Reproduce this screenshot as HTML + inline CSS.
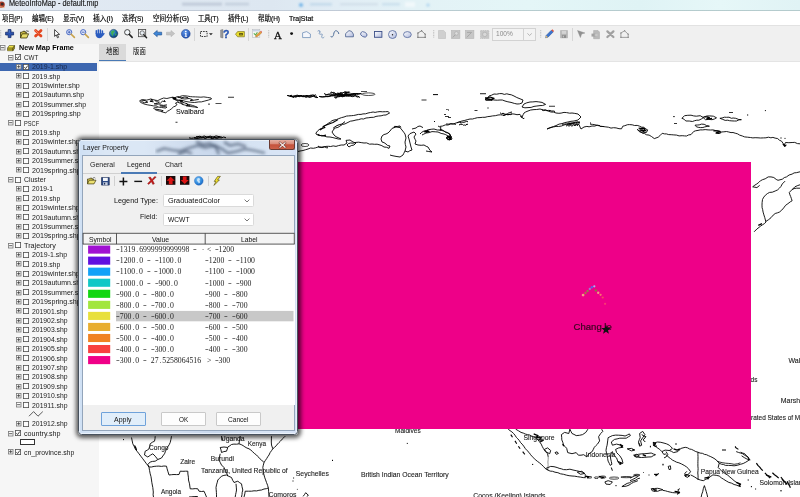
<!DOCTYPE html>
<html><head><meta charset="utf-8"><title>MeteoInfoMap - default.mip</title>
<style>
html,body{margin:0;padding:0;background:#fff;}
#app{position:relative;width:800px;height:497px;overflow:hidden;background:#fff;font-family:"Liberation Sans","Noto Sans CJK SC",sans-serif;}
.t{position:absolute;white-space:pre;transform-origin:0 50%;display:block;}
.b{position:absolute;box-sizing:border-box;}
svg{position:absolute;overflow:visible;}
.c{display:inline-block;width:3.87px;text-align:center;font-style:normal;}
.h{transform:scaleX(1.45);}

</style></head><body>
<div id="app">
<div class="b" style='left:99px;top:61px;width:701px;height:436px;background:#fff;'></div>
<svg width='800' height='497' viewBox='0 0 800 497' style='left:0;top:0;will-change:transform'><path d='M139.8 100.6 L142.4 99.6 L146.7 100.1 L150.9 99.0 L154.7 100.1 L157.8 100.6 L161.0 99.0 L163.7 98.0 L166.9 98.5 L170.1 97.7 L172.7 97.2 L174.9 97.7 L173.8 99.0 L175.9 100.1 L178.6 100.6 L177.5 102.2 L175.4 103.3 L177.0 104.3 L175.9 105.9 L173.3 107.0 L171.7 108.6 L169.5 110.2 L167.4 111.3 L165.8 112.8 L163.2 112.3 L161.0 111.3 L157.8 110.7 L155.2 109.7 L153.6 108.1 L155.7 107.5 L157.8 107.0 L156.3 105.9 L153.6 105.9 L150.9 105.4 L147.8 104.9 L145.1 104.3 L142.4 103.3 L140.3 102.2Z' fill='none' stroke='#000' stroke-width='0.85' stroke-linejoin='round'/><path d='M141.4 100.1 L145.1 100.6 L147.8 102.2 L144.6 102.8 L141.4 101.5' fill='none' stroke='#000' stroke-width='0.9' stroke-linejoin='round'/><path d='M150.9 99.0 L152.5 100.6 L149.9 101.2 L153.6 101.9' fill='none' stroke='#000' stroke-width='1' stroke-linejoin='round'/><path d='M154.7 100.1 L156.3 101.7 L159.4 102.2 L157.8 103.3 L154.1 103.8 L157.3 104.3 L160.5 103.6' fill='none' stroke='#000' stroke-width='0.85' stroke-linejoin='round'/><path d='M157.8 107.0 L161.6 107.5 L165.8 108.1 L166.9 107.0 L163.7 106.5 L160.0 105.9' fill='none' stroke='#000' stroke-width='0.85' stroke-linejoin='round'/><path d='M159.4 104.9 L163.7 105.4 L166.9 104.9' fill='none' stroke='#000' stroke-width='1' stroke-linejoin='round'/><path d='M160.5 102.8 L162.6 101.2 L165.3 101.7 L164.2 100.1' fill='none' stroke='#000' stroke-width='0.9' stroke-linejoin='round'/><path d='M155.2 109.1 L159.4 109.7 L163.2 110.7 L161.6 111.8' fill='none' stroke='#000' stroke-width='0.9' stroke-linejoin='round'/><path d='M174.9 97.7 L177.1 96.7 L179.6 96.6 L182.4 95.7 L184.9 95.8 L187.6 96.1 L190.3 96.6 L192.6 96.8 L195.6 96.9 L197.9 97.0 L200.9 97.2 L203.8 96.9 L207.3 97.4 L211.0 98.0 L211.5 99.0 L208.3 100.1 L204.1 101.2 L201.4 101.9 L198.8 101.9 L194.5 102.5 L190.3 102.2 L186.0 101.5 L182.8 100.6 L179.6 100.4 L177.5 99.8 L175.9 100.1Z' fill='none' stroke='#000' stroke-width='0.85' stroke-linejoin='round'/><path d='M180.7 98.5 L184.9 99.0 L189.2 98.5 L192.4 99.6 L190.3 100.6 L194.5 100.1 L198.8 99.4' fill='none' stroke='#000' stroke-width='0.9' stroke-linejoin='round'/><path d='M172.2 97.7 L175.9 98.3 L173.3 98.9 L176.4 99.1' fill='none' stroke='#000' stroke-width='1.2' stroke-linejoin='round'/><path d='M179.1 100.1 L182.3 100.6 L180.2 101.3 L182.8 101.5' fill='none' stroke='#000' stroke-width='1.1' stroke-linejoin='round'/><path d='M177.5 97.4 L181.8 97.7 L184.9 97.0 L188.1 97.7' fill='none' stroke='#000' stroke-width='0.9' stroke-linejoin='round'/><path d='M180.7 101.7 L184.4 102.8 L188.1 104.3 L192.4 105.4 L195.6 106.5 L197.7 107.5 L194.5 107.0 L190.3 106.5 L187.1 105.7 L184.4 104.9 L182.3 103.6 L180.7 102.5Z' fill='none' stroke='#000' stroke-width='0.85' stroke-linejoin='round'/><path d='M186.0 103.3 L188.1 104.9 L186.5 105.9 L190.3 105.7' fill='none' stroke='#000' stroke-width='1' stroke-linejoin='round'/><path d='M177.5 102.2 L180.7 103.3 L183.4 104.9' fill='none' stroke='#000' stroke-width='0.9' stroke-linejoin='round'/><rect x='208.0' y='103.7' width='2' height='0.8' fill='#000'/><rect x='215.5' y='103.1' width='6' height='0.7' fill='#000'/><rect x='175.5' y='121.8' width='2' height='0.8' fill='#000'/><rect x='228.0' y='96.8' width='6' height='0.8' fill='#000'/><path d='M189.0 137.8 L191.3 138.3 L193.6 138.0 L195.9 138.4 L198.2 138.4 L200.6 137.3 L202.9 137.2 L205.2 138.6 L207.5 137.5 L209.8 137.4 L212.1 138.8 L214.4 137.8 L216.8 138.4 L219.1 137.7 L221.4 137.9 L223.7 137.0 L226.0 137.8' fill='none' stroke='#000' stroke-width='1'/><path d='M194.0 137.6 L196.3 137.7 L198.7 137.8 L201.0 138.0 L203.3 137.7 L205.7 137.9 L208.0 136.6 L210.3 137.2 L212.7 137.9 L215.0 137.5 L217.3 137.8 L219.7 136.7 L222.0 137.2' fill='none' stroke='#000' stroke-width='1'/><path d='M196.0 136.7 L198.0 136.6 L200.0 136.2 L202.0 137.3 L204.0 135.9 L206.0 136.7 L208.0 137.3 L210.0 136.0 L212.0 136.8 L214.0 136.8 L216.0 135.9 L218.0 136.4 L220.0 136.9' fill='none' stroke='#000' stroke-width='1'/><path d='M287.0 95.5 L289.2 95.8 L291.4 96.6 L293.6 95.9 L295.9 96.1 L298.1 96.3 L300.3 95.7 L302.5 96.4 L304.7 96.7 L306.9 97.2 L309.1 96.0 L311.4 96.5 L313.6 96.2 L315.8 97.6 L318.0 97.5' fill='none' stroke='#000' stroke-width='1'/><path d='M288.0 95.5 L289.6 96.2 L291.2 95.0 L292.8 97.0 L294.4 96.8 L296.1 97.2 L297.7 95.8 L299.3 95.7 L300.9 95.5 L302.5 95.8 L304.1 95.6 L305.7 97.0 L307.3 96.4 L308.9 97.3 L310.6 97.3 L312.2 96.5 L313.8 96.2 L315.4 96.6 L317.0 96.1' fill='none' stroke='#000' stroke-width='1'/><path d='M290.0 96.4 L291.9 96.6 L293.7 96.6 L295.6 95.5 L297.4 95.2 L299.3 95.8 L301.1 95.6 L303.0 96.5 L304.9 96.2 L306.7 95.9 L308.6 95.8 L310.4 95.9 L312.3 94.9 L314.1 95.4 L316.0 94.8' fill='none' stroke='#000' stroke-width='1'/><path d='M291.0 95.8 L292.3 96.8 L293.7 97.5 L295.0 96.1 L296.3 96.5 L297.7 96.0 L299.0 96.7 L300.3 96.5 L301.7 96.2 L303.0 96.9 L304.3 96.3 L305.7 95.5 L307.0 95.5 L308.3 95.9 L309.7 95.9 L311.0 94.9 L312.3 96.0 L313.7 95.2 L315.0 95.7' fill='none' stroke='#000' stroke-width='1'/><path d='M319.0 96.4 L322.1 96.9 L325.1 96.6 L328.2 96.7 L331.3 95.3 L334.4 95.1 L337.4 94.7 L340.5 94.6 L343.6 95.3 L346.6 93.9 L349.7 94.4 L352.8 93.6 L355.9 93.5 L358.9 93.5 L362.0 94.0' fill='none' stroke='#000' stroke-width='1'/><path d='M320.0 96.7 L322.3 96.9 L324.6 96.8 L326.8 96.4 L329.1 96.4 L331.4 96.0 L333.7 95.8 L335.9 95.0 L338.2 94.6 L340.5 94.7 L342.8 95.5 L345.1 93.8 L347.3 94.2 L349.6 94.1 L351.9 94.2 L354.2 93.7 L356.4 94.3 L358.7 94.3 L361.0 93.3' fill='none' stroke='#000' stroke-width='1'/><path d='M324.0 93.5 L326.6 94.8 L329.1 94.8 L331.7 95.5 L334.3 94.5 L336.9 94.7 L339.4 95.7 L342.0 95.8 L344.6 95.3 L347.1 96.2 L349.7 95.9 L352.3 96.7 L354.9 95.7 L357.4 96.1 L360.0 97.5' fill='none' stroke='#000' stroke-width='1'/><path d='M325.0 95.2 L326.9 94.6 L328.8 94.0 L330.7 94.1 L332.6 94.6 L334.4 95.8 L336.3 96.1 L338.2 95.0 L340.1 95.3 L342.0 95.5 L343.9 96.5 L345.8 95.7 L347.7 95.5 L349.6 96.0 L351.4 95.1 L353.3 96.3 L355.2 95.6 L357.1 97.1 L359.0 96.5' fill='none' stroke='#000' stroke-width='1'/><path d='M330.0 93.4 L331.6 91.9 L333.1 93.4 L334.7 92.6 L336.3 94.3 L337.9 92.7 L339.4 94.5 L341.0 94.3 L342.6 94.8 L344.1 95.3 L345.7 94.1 L347.3 94.5 L348.9 95.4 L350.4 94.8 L352.0 95.0' fill='none' stroke='#000' stroke-width='1'/><path d='M331.0 92.8 L332.1 92.9 L333.2 92.2 L334.3 93.8 L335.4 93.8 L336.6 93.9 L337.7 93.6 L338.8 94.1 L339.9 94.7 L341.0 94.4 L342.1 93.9 L343.2 95.1 L344.3 94.1 L345.4 93.7 L346.6 94.2 L347.7 94.8 L348.8 95.7 L349.9 94.8 L351.0 95.5' fill='none' stroke='#000' stroke-width='1'/><path d='M334.0 97.2 L335.6 97.1 L337.1 96.8 L338.7 96.6 L340.3 96.3 L341.9 96.5 L343.4 95.6 L345.0 96.0 L346.6 94.7 L348.1 95.0 L349.7 94.8 L351.3 94.2 L352.9 95.1 L354.4 94.1 L356.0 94.7' fill='none' stroke='#000' stroke-width='1'/><path d='M335.0 97.4 L336.1 98.4 L337.2 96.7 L338.3 96.7 L339.4 96.7 L340.6 96.1 L341.7 96.1 L342.8 96.9 L343.9 96.0 L345.0 95.0 L346.1 96.3 L347.2 94.9 L348.3 95.8 L349.4 94.1 L350.6 95.1 L351.7 94.8 L352.8 94.6 L353.9 95.2 L355.0 94.5' fill='none' stroke='#000' stroke-width='1'/><path d='M338.0 93.2 L338.9 93.7 L339.7 93.9 L340.6 92.6 L341.4 93.4 L342.3 93.2 L343.1 93.1 L344.0 92.0 L344.9 91.8 L345.7 92.3 L346.6 92.9 L347.4 92.0 L348.3 92.3 L349.1 91.9 L350.0 92.8' fill='none' stroke='#000' stroke-width='1'/><path d='M339.0 94.1 L339.6 93.1 L340.1 92.8 L340.7 93.9 L341.2 92.4 L341.8 93.0 L342.3 93.1 L342.9 93.1 L343.4 92.1 L344.0 93.0 L344.6 92.7 L345.1 93.3 L345.7 91.6 L346.2 93.3 L346.8 91.7 L347.3 92.9 L347.9 92.2 L348.4 92.8 L349.0 91.4' fill='none' stroke='#000' stroke-width='1'/><ellipse cx='368.5' cy='94.2' rx='6.5' ry='1.3' fill='#fff' stroke='#000' stroke-width='0.7'/><rect x='361.0' y='91.1' width='6' height='0.7' fill='#000'/><rect x='433.0' y='94.1' width='5' height='1' fill='#000'/><rect x='421.5' y='99.6' width='5' height='0.8' fill='#000'/><path d='M316.0 133.0 L317.8 130.7 L320.0 129.0 L322.1 128.2 L324.1 126.2 L326.0 125.0 L328.3 123.3 L330.2 122.3 L331.8 120.8 L334.0 120.0 L336.4 119.6 L338.8 118.6 L341.6 117.6 L344.0 117.0 L346.4 116.1 L348.5 115.9 L351.3 115.7 L353.5 115.5 L356.0 115.0 L358.4 114.4 L361.0 114.4 L363.0 113.9 L365.6 113.8 L368.0 113.0 L370.6 112.5 L373.1 112.0 L375.1 112.4 L377.4 111.9 L380.0 111.6 L382.4 111.8 L385.5 111.7 L388.0 111.6 L389.6 113.0 L386.0 115.0 L383.7 115.1 L381.1 115.8 L378.6 116.0 L376.0 116.4 L373.7 117.3 L371.0 117.4 L368.2 117.8 L366.0 118.0 L363.6 119.0 L361.2 118.8 L358.4 119.7 L356.0 120.0 L353.0 120.8 L350.4 121.2 L348.0 122.4 L345.0 123.9 L342.4 124.5 L340.0 126.0 L337.9 127.4 L335.7 127.9 L334.0 129.0 L332.0 132.0 L334.0 135.0 L336.0 136.7 L338.0 137.6 L341.0 139.0 L338.7 139.1 L336.0 138.4 L332.9 137.6 L330.0 137.0 L326.9 136.9 L324.0 136.0 L321.8 135.4 L319.0 135.6 L316.0 134.0Z' fill='none' stroke='#000' stroke-width='0.9' stroke-linejoin='round'/><path d='M320.0 130.0 L322.3 128.5 L325.0 127.6 L323.0 126.4 L325.8 125.2 L329.0 124.0 L333.0 122.4 L336.0 120.8 L338.0 119.6' fill='none' stroke='#000' stroke-width='1.1' stroke-linejoin='round'/><path d='M333.0 128.4 L335.1 126.7 L337.0 125.6 L339.2 124.7 L342.0 124.0 L345.0 121.6' fill='none' stroke='#000' stroke-width='1' stroke-linejoin='round'/><path d='M317.6 134.4 L319.7 135.3 L322.0 136.0 L326.0 135.2' fill='none' stroke='#000' stroke-width='1.2' stroke-linejoin='round'/><path d='M296.0 152.0 L300.0 151.0 L303.0 150.5 L305.3 149.8 L308.0 149.0 L310.6 148.0 L313.3 148.3 L315.7 147.8 L318.0 147.0 L322.0 147.6 L326.0 146.4 L328.4 146.3 L330.7 146.5 L333.2 145.9 L336.0 146.4 L338.5 145.6 L341.2 145.0 L344.0 145.0 L347.0 143.0 L346.0 140.4 L350.0 140.0 L353.0 142.0 L356.0 143.0 L354.0 145.0 L351.2 145.6 L349.0 147.0 L347.0 145.0 L348.4 143.6 L350.7 143.0 L353.2 143.2 L356.0 142.4 L358.7 142.2 L361.2 142.6 L364.0 143.0 L366.6 142.9 L369.6 144.2 L372.0 144.0 L374.6 144.3 L377.1 144.2 L380.0 145.0 L381.9 145.7 L384.0 147.0 L386.7 147.3 L389.0 148.4 L390.0 146.0 L387.7 145.5 L386.0 144.0 L384.0 142.6 L382.0 142.0 L381.0 139.0 L382.0 136.0 L384.0 134.5 L386.0 134.0 L388.0 133.0 L390.0 131.0 L392.0 128.4 L396.0 127.0 L400.0 127.6 L402.0 130.0 L403.7 132.2 L405.0 134.0 L406.0 138.0 L405.0 142.0 L405.3 144.4 L406.0 147.0 L405.0 151.0 L403.8 153.3 L403.0 155.0 L400.0 157.0 L396.0 156.4 L392.0 155.6 L390.0 155.0' fill='none' stroke='#000' stroke-width='0.9' stroke-linejoin='round'/><path d='M394.0 127.6 L394.4 126.4 L397.2 126.5 L400.0 126.0 L400.8 127.6' fill='none' stroke='#000' stroke-width='1' stroke-linejoin='round'/><path d='M405.0 151.0 L408.0 152.0 L409.9 150.7 L412.0 150.0 L411.0 147.0 L410.0 143.0 L409.0 139.0 L408.0 136.0 L410.0 133.6 L414.0 132.0 L416.0 134.0 L414.0 137.0 L415.2 139.5 L416.0 141.0 L415.0 144.0 L418.0 145.0 L421.2 145.3 L424.0 145.0 L426.2 146.3 L428.0 147.0 L430.0 150.4 L432.0 152.0 L428.8 151.5 L426.0 151.0' fill='none' stroke='#000' stroke-width='0.9' stroke-linejoin='round'/><path d='M412.0 129.0 L416.0 128.0 L417.9 126.5 L420.0 126.0 L423.0 127.6' fill='none' stroke='#000' stroke-width='0.9' stroke-linejoin='round'/><path d='M420.0 134.0 L421.7 132.3 L424.0 131.0 L426.3 130.5 L429.0 129.6 L431.8 129.2 L434.0 129.0 L437.3 130.0 L440.0 130.0 L443.3 130.9 L446.0 132.0 L447.8 132.7 L450.0 134.0 L451.0 137.0 L448.0 139.6 L446.0 138.0 L448.0 136.0 L445.8 134.7 L444.0 134.0 L441.1 133.4 L438.0 132.0 L435.2 131.8 L432.0 131.6 L429.1 132.6 L426.0 133.0 L423.7 134.2 L422.0 135.0' fill='none' stroke='#000' stroke-width='0.9' stroke-linejoin='round'/><path d='M424.0 132.0 L428.0 130.4 L426.0 132.4 L429.6 131.2' fill='none' stroke='#000' stroke-width='1.2' stroke-linejoin='round'/><path d='M447.0 137.0 L450.0 136.0 L450.4 139.0 L447.6 139.6' fill='none' stroke='#000' stroke-width='1.4' stroke-linejoin='round'/><path d='M438.0 126.0 L441.0 127.6 L440.0 131.0' fill='none' stroke='#000' stroke-width='0.9' stroke-linejoin='round'/><path d='M446.0 124.0 L448.8 124.1 L451.0 123.6 L453.7 124.0 L456.0 124.4' fill='none' stroke='#000' stroke-width='0.9' stroke-linejoin='round'/><ellipse cx='305' cy='145' rx='4' ry='1.5' fill='none' stroke='#000' stroke-width='0.7'/><rect x='444.0' y='114.0' width='2' height='0.8' fill='#000'/><rect x='448.0' y='109.5' width='1' height='1' fill='#000'/><rect x='434.0' y='121.0' width='1' height='1' fill='#000'/><rect x='448.0' y='117.1' width='3' height='0.8' fill='#000'/><path d='M318.0 146.1 L319.7 147.0 L321.3 147.1 L323.0 147.0 L324.7 146.7 L326.3 147.7 L328.0 147.8' fill='none' stroke='#000' stroke-width='1'/><path d='M489.0 96.0 L491.3 95.3 L494.0 94.0 L496.6 94.2 L499.6 93.6 L502.0 93.6 L504.3 94.4 L506.8 93.8 L509.0 94.4 L511.3 94.8 L514.0 96.0 L516.8 97.5 L519.0 98.4 L523.0 100.0 L522.0 103.0 L519.3 103.9 L517.0 104.0 L514.3 103.4 L511.0 102.4 L507.9 101.8 L505.0 101.0 L502.3 100.0 L500.0 100.0 L497.3 100.2 L494.0 100.0 L490.0 99.0 L487.0 98.4 L485.0 99.6 L488.0 97.6Z' fill='none' stroke='#000' stroke-width='0.9' stroke-linejoin='round'/><path d='M485.0 98.0 L487.5 98.0 L490.0 97.0 L494.0 98.4 L491.5 99.4 L489.0 99.6 L486.0 100.0 L489.4 99.9 L492.4 100.4' fill='none' stroke='#000' stroke-width='1.3' stroke-linejoin='round'/><path d='M522.0 107.0 L524.0 104.0 L526.8 102.8 L530.0 102.0 L532.8 101.9 L536.0 101.6 L538.8 101.9 L542.0 102.4 L545.6 104.4 L542.6 105.5 L540.0 105.6 L536.9 106.0 L534.0 106.4 L531.1 107.4 L528.0 107.6 L524.9 107.8Z' fill='none' stroke='#000' stroke-width='0.9' stroke-linejoin='round'/><rect x='480.0' y='93.3' width='6' height='0.9' fill='#000'/><rect x='549.0' y='105.8' width='6' height='0.8' fill='#000'/><rect x='446.2' y='109.2' width='1.5' height='0.8' fill='#000'/><rect x='445.0' y='116.2' width='4' height='0.8' fill='#000'/><rect x='474.5' y='110.0' width='3' height='0.8' fill='#000'/><rect x='487.4' y='107.5' width='1.2' height='1' fill='#000'/><path d='M440.0 126.4 L442.7 126.0 L445.3 124.9 L448.0 125.0 L450.6 124.0 L453.0 124.0 L456.0 123.0 L458.8 122.0 L462.0 121.0 L464.8 120.4 L467.2 119.7 L470.0 119.0 L472.5 119.0 L474.7 118.4 L477.3 117.7 L480.0 117.6 L482.7 117.3 L485.0 117.3 L487.8 116.6 L490.0 116.4 L492.7 115.9 L495.3 115.7 L498.0 115.0 L500.6 114.8 L503.3 115.1 L506.0 114.4 L508.8 114.7 L511.6 113.9 L514.0 114.0 L517.0 114.7 L520.0 114.4 L522.0 117.0 L523.2 114.6 L524.0 113.0 L525.8 111.9 L528.0 111.0 L530.7 110.0 L534.0 109.6 L536.7 109.5 L540.0 109.0 L543.2 109.9 L546.0 110.0 L548.3 111.2 L551.0 112.0 L553.6 112.1 L556.0 113.0 L558.9 113.3 L561.1 113.1 L564.0 112.4 L566.6 112.6 L569.7 113.2 L572.0 113.0 L574.8 113.4 L578.0 114.0 L581.0 117.0 L578.0 120.0 L574.0 121.0 L571.0 121.3 L568.0 122.0 L564.8 122.6 L562.0 123.6 L559.1 124.1 L556.0 125.6 L553.5 126.5 L551.0 127.6 L547.0 129.0 L549.0 128.0 L551.0 127.3 L553.7 126.9 L556.0 126.4 L558.4 126.5 L561.5 126.0 L564.0 125.0 L566.4 124.4 L569.0 124.6 L572.0 124.0 L574.2 123.7 L576.6 124.7 L579.0 124.4 L580.0 127.0 L581.0 129.0 L584.0 127.0 L586.9 126.4 L589.1 126.8 L592.0 126.0 L594.7 126.1 L597.1 125.2 L600.0 125.6' fill='none' stroke='#000' stroke-width='0.9' stroke-linejoin='round'/><path d='M440.0 129.0 L442.1 129.9 L444.0 131.0 L445.7 132.5 L448.0 133.0 L451.0 136.0 L452.0 139.0 L449.0 140.0 L447.0 138.0 L448.0 135.6' fill='none' stroke='#000' stroke-width='0.9' stroke-linejoin='round'/><path d='M447.6 137.0 L450.4 137.6 L449.2 139.6 L451.6 139.2' fill='none' stroke='#000' stroke-width='1.3' stroke-linejoin='round'/><path d='M457.0 122.8 L458.4 122.4 L459.8 122.1 L461.1 123.1 L462.5 122.3 L463.9 122.3 L465.2 121.9 L466.6 121.4 L468.0 121.8' fill='none' stroke='#000' stroke-width='1'/><path d='M459.0 125.2 L460.1 124.2 L461.2 124.5 L462.4 124.4 L463.5 125.2 L464.6 125.0 L465.8 125.3 L466.9 124.0 L468.0 124.5' fill='none' stroke='#000' stroke-width='1'/><path d='M500.0 112.7 L501.5 113.9 L503.0 113.2 L504.5 113.9 L506.0 114.4 L507.5 114.7 L509.0 114.4 L510.5 114.6 L512.0 114.0' fill='none' stroke='#000' stroke-width='1'/><path d='M503.0 115.5 L504.1 115.3 L505.2 115.4 L506.4 114.0 L507.5 113.7 L508.6 113.0 L509.8 112.7 L510.9 112.2 L512.0 112.1' fill='none' stroke='#000' stroke-width='1'/><path d='M542.0 110.0 L543.6 110.6 L545.2 110.1 L546.9 110.7 L548.5 110.4 L550.1 110.5 L551.8 111.1 L553.4 111.0 L555.0 111.5' fill='none' stroke='#000' stroke-width='1'/><path d='M520.0 116.6 L520.5 116.2 L521.0 116.8 L521.5 117.6 L522.0 116.9 L522.5 117.7 L523.0 118.1 L523.5 119.0 L524.0 117.9' fill='none' stroke='#000' stroke-width='1'/><path d='M562.0 124.2 L564.2 124.1 L566.5 123.9 L568.8 123.5 L571.0 123.5 L573.2 123.1 L575.5 122.3 L577.8 122.7 L580.0 121.8' fill='none' stroke='#000' stroke-width='1'/><path d='M566.0 126.1 L567.5 125.3 L569.0 126.1 L570.5 125.3 L572.0 126.2 L573.5 124.9 L575.0 125.7 L576.5 124.6 L578.0 125.7' fill='none' stroke='#000' stroke-width='1'/><path d='M568.0 123.0 L570.6 123.0 L572.7 122.7 L575.2 122.3 L578.0 121.6 L580.0 123.0 L577.5 123.2 L575.0 124.2 L572.3 123.6 L570.0 124.4' fill='none' stroke='#000' stroke-width='0.8' stroke-linejoin='round'/><path d='M590.0 124.1 L592.6 124.4 L595.0 124.8 L597.6 125.4 L600.5 126.2 L603.0 126.5 L605.9 126.9 L608.4 127.2 L611.0 128.1 L613.5 127.7 L616.1 127.9 L619.0 128.7 L621.5 128.8 L622.8 126.2 L624.8 125.7 L627.5 124.7 L629.4 124.6 L632.2 124.8 L634.6 125.5 L637.2 125.4 L639.4 126.1 L641.7 127.2 L643.8 127.3 L645.7 128.9 L647.7 129.9 L646.4 132.5 L643.3 132.4 L639.9 132.0 L637.2 129.4 L639.8 131.2 L642.5 133.3 L644.4 133.5 L646.6 134.8 L649.1 135.1 L651.5 136.5 L654.3 138.6 L658.2 137.2 L659.9 135.7 L662.2 133.3 L664.6 133.9 L666.4 133.9 L668.7 134.6 L671.2 134.7 L673.8 134.9 L676.6 135.1 L679.1 135.9 L682.2 135.7 L684.5 135.9 L686.5 136.0 L688.7 134.9 L691.0 134.6 L693.7 131.5 L695.5 130.8 L698.0 130.4 L700.2 129.9 L702.7 129.9 L705.2 129.6 L708.1 129.9 L710.5 130.0 L713.1 129.9 L716.0 130.7 L718.5 131.0 L721.2 132.0 L723.9 131.8 L726.5 131.5 L728.8 132.0 L731.0 132.6 L733.0 132.5 L735.2 133.2 L737.7 133.9 L739.6 135.1 L742.4 136.0 L744.6 136.9 L747.5 137.2 L750.4 137.5 L752.9 137.9 L755.1 137.7 L758.0 137.8 L760.6 138.0 L763.4 137.9 L765.9 137.8 L768.5 137.2 L770.9 137.8 L772.9 137.4 L775.1 138.1 L777.7 138.6 L779.4 140.2 L781.6 141.2 L783.0 143.3 L784.2 145.1 L785.5 142.5 L788.9 142.7 L792.1 142.5 L794.7 142.4 L797.5 143.6 L800.0 143.8' fill='none' stroke='#000' stroke-width='0.9' stroke-linejoin='round'/><path d='M638.6 128.1 L640.7 128.4 L643.0 128.1 L645.1 128.8 L643.8 131.5 L639.9 129.9 L642.2 130.0 L644.0 130.3 L646.4 130.9' fill='none' stroke='#000' stroke-width='1.3' stroke-linejoin='round'/><path d='M713.4 130.9 L716.8 130.9 L719.9 131.5 L716.0 133.0 L718.8 133.3 L721.2 132.5' fill='none' stroke='#000' stroke-width='1.3' stroke-linejoin='round'/><path d='M681.9 118.3 L684.5 115.7 L687.8 115.3 L691.0 115.2 L693.7 115.9 L696.3 116.2 L700.2 115.7 L703.4 117.6 L701.3 119.0 L698.9 120.2 L696.8 120.2 L694.3 120.8 L692.4 121.5 L689.2 121.0 L685.8 121.0 L683.9 119.1Z' fill='none' stroke='#000' stroke-width='0.9' stroke-linejoin='round'/><path d='M702.9 117.3 L706.8 116.0 L709.8 115.9 L713.4 116.2 L716.5 117.8 L714.4 119.0 L712.0 119.7 L708.9 119.4 L705.5 119.7Z' fill='none' stroke='#000' stroke-width='0.9' stroke-linejoin='round'/><path d='M719.9 118.3 L722.1 118.0 L724.3 117.2 L726.5 117.3 L729.0 117.2 L731.4 118.3 L733.1 118.0 L735.7 118.3 L738.8 119.5 L741.4 119.7 L739.0 119.8 L736.5 121.0 L734.4 121.0 L731.9 120.9 L729.5 120.7 L727.8 120.2 L725.2 120.4 L722.8 119.4Z' fill='none' stroke='#000' stroke-width='0.9' stroke-linejoin='round'/><path d='M695.0 125.2 L697.4 125.0 L699.2 124.9 L701.5 124.1 L704.2 124.3 L706.5 125.5 L709.4 126.2 L707.2 126.4 L704.8 126.9 L702.9 127.5 L700.6 127.6 L698.2 127.3 L696.3 126.7Z' fill='none' stroke='#000' stroke-width='0.9' stroke-linejoin='round'/><path d='M704.2 117.0 L707.0 116.9 L709.4 117.6 L706.8 118.9 L709.7 118.8 L712.0 118.3' fill='none' stroke='#000' stroke-width='1.2' stroke-linejoin='round'/><rect x='673.2' y='116.1' width='1.5' height='1' fill='#000'/><rect x='674.0' y='123.2' width='3' height='0.8' fill='#000'/><rect x='729.0' y='112.0' width='4' height='0.8' fill='#000'/><rect x='747.0' y='114.5' width='1.2' height='1' fill='#000'/><rect x='764.9' y='110.1' width='1' height='1' fill='#000'/><rect x='600.0' y='126.2' width='4' height='0.8' fill='#000'/><rect x='590.0' y='122.5' width='1' height='1' fill='#000'/><rect x='780.5' y='137.4' width='1' height='1.2' fill='#000'/><rect x='784.5' y='137.9' width='1' height='1' fill='#000'/><path d='M782.9 143.8 L784.8 146.4 L786.3 144.6' fill='none' stroke='#000' stroke-width='1.2' stroke-linejoin='round'/><path d='M754.1 231.8 L756.9 229.0 L759.0 227.4 L760.6 226.1 L762.5 224.8 L764.6 223.5 L765.9 222.0 L764.8 217.7 L763.9 214.9 L763.1 212.1 L762.6 209.3 L762.1 207.8 L762.0 205.1 L762.1 202.7 L762.5 199.4 L763.8 197.1 L765.4 195.2 L767.5 193.5 L769.6 192.4 L772.3 192.2 L775.2 191.0 L777.6 189.9 L779.4 188.2 L780.9 186.5 L782.3 183.9 L785.1 181.1' fill='none' stroke='#000' stroke-width='0.9' stroke-linejoin='round'/><path d='M765.9 221.4 L768.7 219.6 L771.0 217.7 L773.2 215.1 L775.2 213.5 L777.5 212.8 L779.4 212.1 L781.7 210.2 L783.7 207.9 L785.6 205.3 L787.9 203.7 L790.3 201.8 L792.1 200.8 L791.4 198.6 L790.7 196.6 L789.9 194.8 L789.3 192.4 L792.1 189.6 L794.9 186.8 L797.8 185.5 L800.0 184.8' fill='none' stroke='#000' stroke-width='0.9' stroke-linejoin='round'/><path d='M752.7 186.8 L754.9 185.1 L756.9 183.9 L758.8 182.4 L760.4 180.8 L762.5 179.7 L765.2 178.8 L768.2 176.9 L771.0 176.9 L773.8 177.5 L776.2 179.4 L778.0 180.3 L782.3 179.2 L784.3 177.6 L786.5 176.9 L789.1 175.0 L792.1 174.1 L794.1 172.9 L796.3 172.7 L800.0 171.8' fill='none' stroke='#000' stroke-width='0.9' stroke-linejoin='round'/><path d='M752.7 186.8 L756.9 187.6 L759.7 185.4' fill='none' stroke='#000' stroke-width='0.9' stroke-linejoin='round'/><path d='M792.1 189.6 L794.1 188.6 L796.3 188.2 L800.0 188.2' fill='none' stroke='#000' stroke-width='0.9' stroke-linejoin='round'/><path d='M758.3 225.4 L762.0 223.7' fill='none' stroke='#000' stroke-width='1.3' stroke-linejoin='round'/><path d='M131.5 437.5 L132.2 440.9 L132.8 443.8 L134.1 446.2 L135.2 448.8 L137.1 451.3 L139.0 453.8 L140.8 456.2 L142.8 458.8 L144.5 461.1 L146.5 463.8 L147.9 465.4 L149.0 467.5 L149.6 470.7 L150.2 473.8 L151.0 476.7 L151.5 480.0 L151.8 482.3 L152.3 485.0 L152.8 487.5 L153.1 490.1 L153.3 492.0 L153.1 494.8 L153.5 497.0' fill='none' stroke='#000' stroke-width='0.9' stroke-linejoin='round'/><path d='M155.2 436.2 L155.0 438.7 L154.5 441.2 L152.4 442.2 L150.2 443.8 L149.6 446.5 L149.0 448.8 L147.2 450.2 L145.2 451.2 L144.5 455.0 L147.8 457.0 L150.4 455.2 L152.8 453.8 L155.2 456.2 L157.8 459.5 L155.2 461.2 L152.6 461.4 L150.2 462.0 L147.8 464.5 L149.0 467.0' fill='none' stroke='#000' stroke-width='0.9' stroke-linejoin='round'/><path d='M171.5 436.2 L170.9 439.5 L170.2 442.5 L169.2 444.7 L167.8 446.8 L166.5 448.8 L165.5 451.3 L164.5 453.8 L162.8 456.0 L161.5 458.0 L157.8 459.5' fill='none' stroke='#000' stroke-width='0.9' stroke-linejoin='round'/><path d='M149.0 467.0 L151.4 467.0 L154.1 466.4 L156.5 466.2 L158.9 466.1 L161.5 466.4 L163.9 466.0 L166.5 466.2 L167.1 468.8 L167.8 471.2 L169.0 475.0 L171.5 474.7 L174.0 474.5 L176.4 474.6 L179.0 474.5 L180.2 471.2 L182.9 471.3 L185.4 471.2 L187.8 471.2 L187.9 474.0 L188.4 477.2 L188.5 480.0 L189.5 483.8 L189.8 486.0 L190.2 488.8 L192.7 488.9 L195.2 488.6 L197.8 488.8 L199.0 491.2 L201.6 491.5 L204.0 491.2 L205.2 493.8 L206.5 497.0' fill='none' stroke='#000' stroke-width='0.9' stroke-linejoin='round'/><path d='M189.0 497.0 L191.9 496.8 L194.9 496.5 L197.8 496.5' fill='none' stroke='#000' stroke-width='0.9' stroke-linejoin='round'/><path d='M221.5 436.2 L222.8 440.0' fill='none' stroke='#000' stroke-width='0.9' stroke-linejoin='round'/><path d='M240.2 436.2 L239.9 438.9 L239.4 441.1 L239.0 443.8 L241.2 444.6 L243.1 445.6 L244.9 446.9 L246.9 448.0 L249.0 448.8 L250.9 450.1 L252.7 451.8 L254.7 453.7 L256.5 455.0 L258.0 456.6 L259.7 458.6 L261.5 460.0 L264.0 462.5' fill='none' stroke='#000' stroke-width='0.9' stroke-linejoin='round'/><path d='M271.5 436.2 L271.4 438.9 L271.3 442.0 L271.5 445.0 L272.8 448.8 L274.5 447.4 L276.0 445.9 L277.6 444.0 L279.0 442.5 L280.4 441.2 L282.2 439.1 L283.7 437.7 L285.2 436.2' fill='none' stroke='#000' stroke-width='0.9' stroke-linejoin='round'/><path d='M272.8 448.8 L271.5 450.7 L270.1 452.6 L269.0 455.0 L267.7 456.8 L266.7 458.5 L265.4 460.4 L264.0 462.5 L263.3 465.2 L262.8 467.5 L263.3 470.0 L263.4 472.5 L264.0 475.0 L264.8 477.8 L265.6 479.9 L266.5 482.5 L267.6 485.3 L268.5 488.8 L268.6 491.7 L268.9 494.0 L269.0 497.0' fill='none' stroke='#000' stroke-width='0.9' stroke-linejoin='round'/><path d='M220.2 447.5 L224.0 447.0 L227.8 447.5 L226.5 451.2 L223.8 451.6 L221.5 452.5 L221.0 449.9Z' fill='none' stroke='#000' stroke-width='0.9' stroke-linejoin='round'/><path d='M239.0 443.8 L236.6 444.2 L233.9 444.1 L231.5 444.5 L229.8 445.8 L227.8 447.0' fill='none' stroke='#000' stroke-width='0.9' stroke-linejoin='round'/><path d='M220.2 453.8 L219.5 457.0 L219.0 460.0 L220.2 462.4 L221.5 465.0 L224.0 467.5 L225.1 470.2 L226.5 472.5 L227.8 476.2' fill='none' stroke='#000' stroke-width='0.9' stroke-linejoin='round'/><path d='M268.5 488.0 L266.3 488.7 L264.0 489.0 L261.5 490.0 L258.9 490.3 L256.7 490.9 L254.0 490.8 L251.5 491.2 L248.3 491.2 L245.2 491.2 L244.8 493.9 L244.0 497.0' fill='none' stroke='#000' stroke-width='0.9' stroke-linejoin='round'/><path d='M216.5 497.0 L216.5 494.8 L216.4 492.4 L216.2 489.8 L216.0 487.5 L216.5 484.9 L217.3 482.2 L217.8 480.0 L219.5 478.3 L221.5 476.2 L223.9 475.4 L226.5 475.0 L228.8 476.3 L231.5 477.5 L232.7 480.3 L234.0 482.5 L237.8 481.2 L239.8 482.8 L241.5 483.8 L242.0 486.6 L242.8 490.0 L242.2 492.3 L242.0 494.6 L241.5 497.0' fill='none' stroke='#000' stroke-width='0.9' stroke-linejoin='round'/><path d='M235.2 497.0 L235.6 494.6 L236.1 492.4 L236.5 490.0 L236.3 487.1 L236.0 483.8' fill='none' stroke='#000' stroke-width='0.9' stroke-linejoin='round'/><path d='M134.5 445.5 L135.6 447.5 L136.5 450.0' fill='none' stroke='#000' stroke-width='1.3' stroke-linejoin='round'/><rect x='123.0' y='439.1' width='1' height='1' fill='#000'/><rect x='406.8' y='442.9' width='1' height='1' fill='#000'/><rect x='332.0' y='459.8' width='1' height='1.2' fill='#000'/><rect x='292.5' y='480.5' width='1' height='1' fill='#000'/><rect x='296.9' y='488.9' width='0.8' height='0.8' fill='#000'/><rect x='293.1' y='477.5' width='1' height='1' fill='#000'/><path d='M303.1 496.4 L304.6 494.4 L305.7 492.7 L308.4 495.3 L306.8 496.4' fill='none' stroke='#000' stroke-width='0.9' stroke-linejoin='round'/><path d='M508.2 429.2 L510.0 430.6 L511.9 431.9 L513.6 433.5 L514.9 435.1 L516.3 437.3 L517.8 438.8 L519.3 440.5 L520.6 442.6 L522.1 444.1 L523.7 446.1 L525.2 448.4 L527.1 450.6 L529.0 452.4 L530.6 454.7 L532.3 456.7 L534.2 458.5 L535.9 460.1 L537.5 461.4 L539.3 462.7 L541.2 464.3 L543.5 466.5 L545.4 468.6 L547.6 470.0' fill='none' stroke='#000' stroke-width='0.9' stroke-linejoin='round'/><path d='M515.7 429.2 L518.5 430.8 L521.0 432.4 L523.3 433.1 L525.2 434.0 L527.4 434.6 L529.7 435.0 L531.7 436.1 L533.7 436.7 L535.8 438.2 L538.0 439.9 L539.5 441.8 L541.2 444.1 L542.2 446.3 L543.3 448.4 L545.4 451.6 L547.6 453.7 L548.2 456.9' fill='none' stroke='#000' stroke-width='0.9' stroke-linejoin='round'/><path d='M548.2 456.9 L548.2 459.3 L547.9 462.0 L548.1 464.6 L548.0 467.2 L548.0 470.0' fill='none' stroke='#888' stroke-width='0.9' stroke-linejoin='round'/><path d='M510.8 434.6 L512.5 437.3' fill='none' stroke='#000' stroke-width='1.1' stroke-linejoin='round'/><path d='M515.0 440.9 L516.7 443.7' fill='none' stroke='#000' stroke-width='1.1' stroke-linejoin='round'/><path d='M518.4 446.2 L520.1 448.8' fill='none' stroke='#000' stroke-width='1.1' stroke-linejoin='round'/><path d='M522.7 451.6 L524.8 454.3' fill='none' stroke='#000' stroke-width='1.1' stroke-linejoin='round'/><path d='M533.7 433.9 L536.0 434.8 L538.0 435.6 L535.9 437.7 L538.4 437.3 L541.2 437.3 L539.1 439.9 L543.3 440.3 L540.1 442.0' fill='none' stroke='#000' stroke-width='1.3' stroke-linejoin='round'/><path d='M544.4 449.4 L547.6 447.9 L550.7 450.5 L549.7 453.7 L546.5 452.2Z' fill='none' stroke='#000' stroke-width='0.9' stroke-linejoin='round'/><path d='M555.0 452.6 L557.1 451.8 L558.4 453.5 L556.3 454.3Z' fill='none' stroke='#000' stroke-width='0.9' stroke-linejoin='round'/><rect x='532.0' y='463.9' width='1.2' height='1' fill='#000'/><path d='M545.4 468.6 L548.1 467.5 L550.7 466.4 L554.0 466.7 L557.1 467.5 L559.1 468.3 L561.3 468.8 L563.5 469.6 L566.6 469.7 L569.9 469.2 L573.0 470.0 L576.2 470.7 L579.4 471.4 L582.6 472.2 L585.8 474.9' fill='none' stroke='#000' stroke-width='0.9' stroke-linejoin='round'/><path d='M547.6 470.0 L550.2 471.1 L552.5 471.3 L555.0 472.2 L557.9 472.7 L560.5 473.8 L563.5 474.3 L566.3 475.1 L569.1 475.7 L572.0 476.0 L574.8 476.2 L577.5 476.7 L580.5 477.1 L583.2 477.6 L585.8 477.7' fill='none' stroke='#000' stroke-width='0.9' stroke-linejoin='round'/><path d='M577.3 472.2 L581.6 471.3 L584.7 473.4 L580.5 474.3Z' fill='none' stroke='#000' stroke-width='0.9' stroke-linejoin='round'/><ellipse cx='589.4' cy='477.3' rx='2.5' ry='0.8' fill='none' stroke='#000' stroke-width='0.75'/><ellipse cx='596.4' cy='477.7' rx='2.1' ry='0.8' fill='none' stroke='#000' stroke-width='0.75'/><ellipse cx='602.8' cy='477.1' rx='3.2' ry='1.1' fill='none' stroke='#000' stroke-width='0.75'/><ellipse cx='614.1' cy='478.1' rx='4.7' ry='1.1' fill='none' stroke='#000' stroke-width='0.75'/><ellipse cx='626.2' cy='477.1' rx='5.3' ry='0.6' fill='none' stroke='#000' stroke-width='0.75'/><ellipse cx='636.8' cy='475.1' rx='3.2' ry='0.8' fill='none' stroke='#000' stroke-width='0.75'/><path d='M584.7 476.0 L589.0 476.8 L587.3 478.1' fill='none' stroke='#000' stroke-width='1.3' stroke-linejoin='round'/><path d='M598.6 476.4 L601.1 476.9 L603.9 477.3 L601.3 478.1' fill='none' stroke='#000' stroke-width='1.2' stroke-linejoin='round'/><path d='M604.9 481.9 L608.1 480.7 L610.2 481.3 L612.4 481.9 L610.2 484.5 L606.0 484.1Z' fill='none' stroke='#000' stroke-width='0.9' stroke-linejoin='round'/><path d='M621.9 486.6 L624.5 484.9 L627.2 483.4 L629.4 482.8 L631.4 481.6 L633.6 480.7 L635.9 480.1 L637.8 478.7 L640.0 478.1' fill='none' stroke='#000' stroke-width='0.9' stroke-linejoin='round'/><path d='M621.9 486.6 L626.2 486.2 L629.0 485.1 L631.5 483.4 L633.6 482.2 L635.9 481.5 L637.9 480.7' fill='none' stroke='#000' stroke-width='0.9' stroke-linejoin='round'/><rect x='615.5' y='485.0' width='1' height='1.2' fill='#000'/><rect x='546.9' y='468.9' width='1' height='1' fill='#000'/><path d='M569.9 429.2 L568.8 433.5 L564.6 432.4 L561.4 434.6 L561.7 437.3 L561.8 439.9 L562.8 442.3 L563.5 445.2 L565.2 446.6 L566.7 448.4 L567.7 452.6 L572.0 453.7 L576.2 452.6 L578.4 455.2 L581.0 455.2 L583.7 454.7 L586.9 456.9 L589.0 453.7 L592.2 451.6 L593.4 449.2 L594.3 447.3 L595.8 445.7 L597.5 444.1 L599.6 440.9 L598.6 436.7 L600.7 433.5 L602.8 431.4 L601.7 429.2' fill='none' stroke='#000' stroke-width='0.9' stroke-linejoin='round'/><path d='M569.9 429.2 L570.9 431.3 L572.0 433.5 L574.0 434.4 L576.2 435.6 L579.5 435.3 L582.6 434.6 L585.8 432.4 L587.9 429.2' fill='none' stroke='#000' stroke-width='0.9' stroke-linejoin='round'/><path d='M562.6 444.1 L563.9 446.2' fill='none' stroke='#000' stroke-width='1.3' stroke-linejoin='round'/><path d='M608.1 437.7 L610.1 436.7 L612.4 435.6 L615.7 435.1 L618.7 435.2 L622.1 435.4 L625.1 436.0 L627.3 435.0 L629.4 433.9 L630.4 435.6 L628.4 436.8 L626.2 438.2 L623.0 438.2 L619.8 438.2 L617.1 438.9 L614.5 439.4 L611.3 442.0 L612.4 445.2 L616.6 444.1 L620.9 445.2 L623.0 447.3 L618.7 447.9 L615.6 449.4 L616.6 452.6 L618.2 454.2 L619.8 455.8 L621.9 459.0 L623.0 463.2 L619.8 464.3 L617.7 461.1 L616.6 457.9 L614.9 456.4 L613.4 454.7 L612.4 451.6 L610.2 454.7 L610.7 459.0 L611.3 461.5 L611.9 464.3 L610.2 465.4 L609.3 463.4 L608.1 461.1 L607.6 458.3 L607.1 455.8 L606.5 452.9 L606.0 450.5 L606.4 447.8 L607.1 445.2 L607.7 440.9Z' fill='none' stroke='#000' stroke-width='0.9' stroke-linejoin='round'/><path d='M619.8 444.5 L622.6 445.8 L620.9 447.1' fill='none' stroke='#000' stroke-width='1.4' stroke-linejoin='round'/><path d='M617.7 461.5 L621.3 462.8 L619.6 464.5' fill='none' stroke='#000' stroke-width='1.3' stroke-linejoin='round'/><path d='M627.2 448.8 L631.5 448.4 L634.7 450.1 L631.5 450.9 L629.2 449.8Z' fill='none' stroke='#000' stroke-width='0.9' stroke-linejoin='round'/><path d='M633.6 455.2 L636.8 454.3 L639.4 456.0 L636.2 457.3Z' fill='none' stroke='#000' stroke-width='0.9' stroke-linejoin='round'/><path d='M611.3 467.5 L612.4 470.7' fill='none' stroke='#000' stroke-width='1' stroke-linejoin='round'/><path d='M638.9 443.1 L640.0 445.2' fill='none' stroke='#000' stroke-width='0.9' stroke-linejoin='round'/><path d='M653.4 443.1 L657.6 442.0 L660.8 442.3 L664.0 443.1 L666.7 443.9 L669.3 445.2 L671.0 446.9 L672.5 448.4 L669.3 450.5 L665.1 450.1 L661.9 451.6 L659.7 449.4 L656.6 447.3 L653.4 445.2Z' fill='none' stroke='#000' stroke-width='0.9' stroke-linejoin='round'/><path d='M652.9 442.4 L655.5 443.7 L653.8 445.4 L656.8 446.2' fill='none' stroke='#000' stroke-width='1.4' stroke-linejoin='round'/><path d='M669.3 450.5 L671.4 451.3 L673.6 452.6 L677.8 451.6 L679.4 449.9 L681.0 448.4 L685.2 447.3 L687.5 447.8 L689.6 449.0 L691.6 449.4 L693.8 450.5 L695.8 451.6 L698.0 452.2 L700.1 453.1 L702.4 453.3 L704.5 454.4 L706.5 454.7 L708.5 455.7 L710.8 456.7 L713.0 457.8 L715.0 459.0 L717.2 460.9 L719.2 463.2 L721.4 464.2 L723.4 464.5 L725.6 465.4 L728.5 465.4 L731.1 465.5 L734.1 465.8 L737.2 465.3 L740.5 464.3 L743.2 463.5 L745.8 462.2 L749.0 460.1 L747.9 456.9 L746.2 455.5 L744.7 453.7 L742.5 453.0 L740.5 452.2' fill='none' stroke='#000' stroke-width='0.9' stroke-linejoin='round'/><path d='M673.6 448.8 L677.2 450.1 L679.9 448.8' fill='none' stroke='#000' stroke-width='1.3' stroke-linejoin='round'/><path d='M665.1 453.7 L666.7 455.2 L668.2 456.9 L670.5 458.5 L672.5 460.1 L674.7 461.2 L676.6 462.2 L678.9 462.8 L681.6 464.0 L684.2 465.4 L686.4 466.8 L688.4 468.6 L690.6 471.7 L688.4 474.3 L685.2 476.0 L684.8 473.4 L686.9 471.3' fill='none' stroke='#000' stroke-width='0.9' stroke-linejoin='round'/><path d='M661.9 451.6 L664.0 454.7 L665.1 453.7' fill='none' stroke='#000' stroke-width='0.9' stroke-linejoin='round'/><path d='M666.1 451.6 L667.8 454.7 L666.1 456.9 L664.0 457.9' fill='none' stroke='#000' stroke-width='0.9' stroke-linejoin='round'/><path d='M690.6 474.9 L692.9 476.0 L694.8 477.1 L698.0 479.2 L700.6 480.1 L703.3 480.7 L705.9 479.2 L708.6 478.1 L710.8 476.3 L712.9 474.9 L716.2 475.3 L719.2 476.0 L721.4 477.9 L723.5 479.2 L726.2 480.9 L728.8 482.4 L731.4 483.1 L734.1 484.5 L736.1 485.0 L738.4 485.9 L740.5 486.6 L738.4 483.4 L736.3 482.3 L734.1 480.7 L731.9 478.7 L729.9 477.1 L727.8 475.2 L725.6 473.9 L723.3 472.2 L721.4 470.7 L719.6 469.0 L718.2 467.5 L719.2 463.2' fill='none' stroke='#000' stroke-width='0.9' stroke-linejoin='round'/><path d='M698.0 452.2 L697.9 454.6 L698.0 456.6 L698.0 459.1 L697.9 461.7 L697.9 463.5 L697.9 466.1 L698.1 468.5 L698.0 470.5 L697.8 473.0 L698.0 475.1 L698.1 477.5 L698.0 479.8' fill='none' stroke='#000' stroke-width='0.9' stroke-linejoin='round'/><path d='M685.7 474.3 L688.0 475.1 L689.9 475.6 L687.4 477.3 L684.8 476.0Z' fill='none' stroke='#000' stroke-width='1' stroke-linejoin='round'/><path d='M704.4 478.1 L706.6 477.7 L709.0 476.8 L707.6 479.4' fill='none' stroke='#000' stroke-width='1.2' stroke-linejoin='round'/><path d='M736.2 482.4 L738.2 483.2 L740.5 484.1 L738.8 486.2' fill='none' stroke='#000' stroke-width='1.4' stroke-linejoin='round'/><path d='M639.6 433.5 L642.7 431.4 L644.9 434.6 L642.7 437.7 L640.6 440.9 L641.7 445.2 L639.6 446.2 L638.5 442.0 L639.3 439.7 L640.2 437.7Z' fill='none' stroke='#000' stroke-width='0.9' stroke-linejoin='round'/><path d='M641.7 434.6 L643.7 435.8 L645.9 436.7 L643.2 439.9 L645.3 442.0' fill='none' stroke='#000' stroke-width='1' stroke-linejoin='round'/><path d='M634.2 455.8 L636.2 455.1 L638.5 454.3 L641.8 453.8 L644.9 453.7 L648.0 453.4 L651.2 453.0 L653.4 454.0 L655.5 454.7 L653.5 455.6 L651.2 456.9 L648.0 457.0 L644.9 457.3 L641.5 457.5 L638.5 457.3 L636.5 456.7Z' fill='none' stroke='#000' stroke-width='0.9' stroke-linejoin='round'/><path d='M642.7 454.7 L645.9 456.0' fill='none' stroke='#000' stroke-width='1.4' stroke-linejoin='round'/><path d='M668.2 466.4 L670.4 465.8 L670.8 469.2 L669.1 469.6Z' fill='none' stroke='#000' stroke-width='0.9' stroke-linejoin='round'/><rect x='662.4' y='463.8' width='1.2' height='1.6' fill='#000'/><rect x='654.1' y='473.8' width='3' height='1.2' fill='#000'/><rect x='632.4' y='449.1' width='2' height='1' fill='#000'/><rect x='649.9' y='445.8' width='1' height='1.6' fill='#000'/><rect x='675.3' y='443.4' width='1.4' height='1.2' fill='#000'/><rect x='643.2' y='472.2' width='0.8' height='0.8' fill='#000'/><rect x='648.5' y='474.5' width='1' height='1' fill='#000'/><path d='M655.5 476.0 L658.7 473.4' fill='none' stroke='#000' stroke-width='1.2' stroke-linejoin='round'/><path d='M630.0 478.1 L631.9 477.3 L634.2 476.0 L637.4 474.9' fill='none' stroke='#000' stroke-width='0.9' stroke-linejoin='round'/><path d='M630.0 480.7 L632.7 479.4 L635.3 478.1 L638.5 476.0' fill='none' stroke='#000' stroke-width='0.9' stroke-linejoin='round'/><path d='M651.2 488.7 L654.5 488.5 L657.6 488.3 L660.2 488.8 L662.9 489.8 L660.2 490.3 L657.6 491.3 L654.9 491.2 L652.3 490.9Z' fill='none' stroke='#000' stroke-width='0.9' stroke-linejoin='round'/><path d='M652.3 488.7 L654.5 489.6 L656.6 490.0 L653.8 491.3' fill='none' stroke='#000' stroke-width='1.2' stroke-linejoin='round'/><path d='M662.9 490.4 L665.4 490.8 L667.7 491.5 L670.2 492.1 L672.5 492.6 L674.9 492.8 L677.6 492.7 L679.9 493.0 L677.8 489.8 L679.9 488.7' fill='none' stroke='#000' stroke-width='0.9' stroke-linejoin='round'/><path d='M674.6 491.3 L676.9 491.6 L678.9 492.6 L677.2 494.3' fill='none' stroke='#000' stroke-width='1.2' stroke-linejoin='round'/><path d='M701.2 497.0 L701.8 494.1 L702.7 491.8 L703.3 488.7 L704.4 485.6 L705.4 488.7 L706.2 491.4 L707.0 494.2 L707.6 497.0' fill='none' stroke='#000' stroke-width='0.9' stroke-linejoin='round'/><path d='M756.4 463.2 L757.9 465.4 L759.7 467.1 L761.3 469.1 L762.8 470.7' fill='none' stroke='#000' stroke-width='1.2' stroke-linejoin='round'/><path d='M764.9 472.8 L766.7 474.8 L768.5 476.6 L770.2 478.1' fill='none' stroke='#000' stroke-width='1.2' stroke-linejoin='round'/><path d='M772.4 472.8 L774.5 474.7 L776.6 476.2 L778.7 478.1' fill='none' stroke='#000' stroke-width='1.2' stroke-linejoin='round'/><path d='M780.9 477.1 L782.4 479.0 L783.9 481.0 L785.5 482.4 L787.2 484.5' fill='none' stroke='#000' stroke-width='1.2' stroke-linejoin='round'/><path d='M787.2 481.3 L788.2 483.7 L789.3 485.3 L790.4 487.7' fill='none' stroke='#000' stroke-width='1.2' stroke-linejoin='round'/><path d='M766.0 474.9 L768.5 475.7 L771.3 477.1' fill='none' stroke='#000' stroke-width='1.2' stroke-linejoin='round'/><path d='M781.9 479.2 L784.1 481.4 L786.2 483.4' fill='none' stroke='#000' stroke-width='1.2' stroke-linejoin='round'/><path d='M736.2 451.6 L738.4 452.4 L740.3 453.0 L742.6 453.7 L745.2 455.5 L747.9 456.9 L750.1 460.1 L746.9 459.0 L744.3 457.6 L741.6 455.8' fill='none' stroke='#000' stroke-width='0.9' stroke-linejoin='round'/><path d='M735.2 447.3 L738.4 449.4' fill='none' stroke='#000' stroke-width='1.1' stroke-linejoin='round'/><path d='M717.1 461.1 L719.8 462.1 L722.9 462.8 L725.6 463.2 L728.3 463.4 L731.1 463.7 L734.1 464.3 L737.4 463.8 L740.5 462.8' fill='none' stroke='#000' stroke-width='0.8' stroke-linejoin='round'/><rect x='722.0' y='449.5' width='4' height='1' fill='#000'/><rect x='747.7' y='479.4' width='1' height='1.2' fill='#000'/><rect x='750.9' y='486.0' width='1' height='1.2' fill='#000'/><rect x='755.1' y='488.5' width='1' height='1' fill='#000'/><rect x='780.2' y='490.3' width='1.6' height='1' fill='#000'/><rect x='734.9' y='446.2' width='1' height='1.2' fill='#000'/><text x='176.0' y='114.3' font-family='Liberation Sans, sans-serif' font-size='7.6' fill='#1c1c1c' stroke='#1c1c1c' stroke-width='0.12' textLength='28.0' lengthAdjust='spacingAndGlyphs'>Svalbard</text><text x='149.0' y='449.6' font-family='Liberation Sans, sans-serif' font-size='7.6' fill='#1c1c1c' stroke='#1c1c1c' stroke-width='0.12' textLength='19.5' lengthAdjust='spacingAndGlyphs'>Congo</text><text x='180.2' y='463.6' font-family='Liberation Sans, sans-serif' font-size='7.6' fill='#1c1c1c' stroke='#1c1c1c' stroke-width='0.12' textLength='15.0' lengthAdjust='spacingAndGlyphs'>Zaire</text><text x='161.0' y='493.6' font-family='Liberation Sans, sans-serif' font-size='7.6' fill='#1c1c1c' stroke='#1c1c1c' stroke-width='0.12' textLength='20.0' lengthAdjust='spacingAndGlyphs'>Angola</text><text x='220.7' y='440.6' font-family='Liberation Sans, sans-serif' font-size='7.6' fill='#1c1c1c' stroke='#1c1c1c' stroke-width='0.12' textLength='24.0' lengthAdjust='spacingAndGlyphs'>Uganda</text><text x='247.7' y='446.3' font-family='Liberation Sans, sans-serif' font-size='7.6' fill='#1c1c1c' stroke='#1c1c1c' stroke-width='0.12' textLength='18.3' lengthAdjust='spacingAndGlyphs'>Kenya</text><text x='210.7' y='460.6' font-family='Liberation Sans, sans-serif' font-size='7.6' fill='#1c1c1c' stroke='#1c1c1c' stroke-width='0.12' textLength='23.3' lengthAdjust='spacingAndGlyphs'>Burundi</text><text x='201.0' y='473.1' font-family='Liberation Sans, sans-serif' font-size='7.6' fill='#1c1c1c' stroke='#1c1c1c' stroke-width='0.12' textLength='86.7' lengthAdjust='spacingAndGlyphs'>Tanzania, United Republic of</text><text x='268.5' y='497.1' font-family='Liberation Sans, sans-serif' font-size='7.6' fill='#1c1c1c' stroke='#1c1c1c' stroke-width='0.12' textLength='28.0' lengthAdjust='spacingAndGlyphs'>Comoros</text><text x='295.8' y='476.1' font-family='Liberation Sans, sans-serif' font-size='7.6' fill='#1c1c1c' stroke='#1c1c1c' stroke-width='0.12' textLength='33.0' lengthAdjust='spacingAndGlyphs'>Seychelles</text><text x='360.9' y='476.9' font-family='Liberation Sans, sans-serif' font-size='7.6' fill='#1c1c1c' stroke='#1c1c1c' stroke-width='0.12' textLength='87.9' lengthAdjust='spacingAndGlyphs'>British Indian Ocean Territory</text><text x='395.0' y='432.8' font-family='Liberation Sans, sans-serif' font-size='7.6' fill='#1c1c1c' stroke='#1c1c1c' stroke-width='0.12' textLength='25.7' lengthAdjust='spacingAndGlyphs'>Maldives</text><text x='473.2' y='497.7' font-family='Liberation Sans, sans-serif' font-size='7.6' fill='#1c1c1c' stroke='#1c1c1c' stroke-width='0.12' textLength='72.2' lengthAdjust='spacingAndGlyphs'>Cocos (Keeling) Islands</text><text x='523.5' y='440.3' font-family='Liberation Sans, sans-serif' font-size='7.6' fill='#1c1c1c' stroke='#1c1c1c' stroke-width='0.12' textLength='31.1' lengthAdjust='spacingAndGlyphs'>Singapore</text><text x='585.8' y='456.9' font-family='Liberation Sans, sans-serif' font-size='7.6' fill='#1c1c1c' stroke='#1c1c1c' stroke-width='0.12' textLength='29.8' lengthAdjust='spacingAndGlyphs'>Indonesia</text><text x='700.8' y='473.9' font-family='Liberation Sans, sans-serif' font-size='7.6' fill='#1c1c1c' stroke='#1c1c1c' stroke-width='0.12' textLength='57.8' lengthAdjust='spacingAndGlyphs'>Papua New Guinea</text><text x='759.6' y='485.0' font-family='Liberation Sans, sans-serif' font-size='7.6' fill='#1c1c1c' stroke='#1c1c1c' stroke-width='0.12' textLength='50.0' lengthAdjust='spacingAndGlyphs'>Solomon Islands</text><text x='788.5' y='363.1' font-family='Liberation Sans, sans-serif' font-size='7.6' fill='#1c1c1c' stroke='#1c1c1c' stroke-width='0.12' textLength='56.0' lengthAdjust='spacingAndGlyphs'>Wallis and Futuna</text><text x='780.8' y='402.6' font-family='Liberation Sans, sans-serif' font-size='7.6' fill='#1c1c1c' stroke='#1c1c1c' stroke-width='0.12' textLength='50.0' lengthAdjust='spacingAndGlyphs'>Marshall Islands</text><text x='757.4' y='382.0' font-family='Liberation Sans, sans-serif' font-size='7.6' fill='#1c1c1c' stroke='#1c1c1c' stroke-width='0.12' textLength='72.8' lengthAdjust='spacingAndGlyphs' text-anchor='end'>Northern Mariana Islands</text><text x='736.3' y='419.5' font-family='Liberation Sans, sans-serif' font-size='7.6' fill='#1c1c1c' stroke='#1c1c1c' stroke-width='0.12' textLength='89.8' lengthAdjust='spacingAndGlyphs'>Federated States of Micronesia</text></svg>
<div class="b" style='left:250px;top:161.5px;width:501.2px;height:267px;background:#ee0088;'></div>
<svg width='800' height='497' viewBox='0 0 800 497' style='left:0;top:0;will-change:transform'><circle cx='583.1' cy='295.1' r='1.4' fill='#f69a86'/><circle cx='585.5' cy='293' r='1.15' fill='#a47848'/><circle cx='587.6' cy='291.1' r='1.15' fill='#8c8a48'/><circle cx='589.8' cy='289' r='1.15' fill='#a078d0'/><circle cx='591.9' cy='287.2' r='1.2' fill='#6a5ae0'/><circle cx='594.3' cy='286.3' r='1.1' fill='#a8b4f2'/><circle cx='595.8' cy='290.5' r='1.15' fill='#8a7a40'/><circle cx='598.2' cy='292.7' r='1.2' fill='#f2a080'/><circle cx='600.6' cy='294.8' r='1.15' fill='#f87070'/><circle cx='602.7' cy='297.5' r='1.1' fill='#f84462'/><circle cx='605.1' cy='303.8' r='1.1' fill='#f83a72'/><text x='573.6' y='329.8' font-family='Liberation Sans, sans-serif' font-size='9.4' fill='#3a0420' stroke='#3a0420' stroke-width='0.2' textLength='38.2' lengthAdjust='spacingAndGlyphs'>Chang le</text><polygon points='606.00,324.60 607.23,327.90 610.76,328.05 608.00,330.25 608.94,333.65 606.00,331.70 603.06,333.65 604.00,330.25 601.24,328.05 604.77,327.90' fill='#111'/></svg>
<div class="b" style='left:0px;top:0px;width:800px;height:11px;background:linear-gradient(90deg,#e2eaf3 0%,#dfe8f2 22%,#dde7f1 34%,#e1edf5 42%,#e3f2f6 52%,#e4f6f7 66%,#dff3f5 80%,#e6f7f8 90%,#e0f3f5 100%);'></div>
<svg width='800' height='10' viewBox='0 0 800 10' style='left:0;top:0;overflow:hidden'><defs><filter id='tb' x='-5%' y='-100%' width='110%' height='300%'><feGaussianBlur stdDeviation='1.1'/></filter></defs><g filter='url(#tb)'><rect x='182' y='2.6' width='40' height='3' fill='#8d9bb0' opacity='.38'/><rect x='225' y='2.8' width='24' height='2.6' fill='#8d9bb0' opacity='.32'/><circle cx='301' cy='5' r='2' fill='#58a8e6' opacity='.8'/><rect x='310' y='3' width='22' height='2.6' fill='#9cc0dc' opacity='.4'/><rect x='340' y='3' width='38' height='2.4' fill='#b4c4d4' opacity='.35'/><rect x='382' y='3' width='18' height='2.4' fill='#9cc0dc' opacity='.35'/><circle cx='428' cy='5' r='1.6' fill='#7cb8ea' opacity='.55'/><rect x='405' y='2' width='10' height='5' fill='#fff' opacity='.5'/></g></svg>
<svg width='6' height='8' viewBox='0 0 6 8' style='left:0;top:0.6px'><circle cx='1.6' cy='3.6' r='3.2' fill='#b4422c'/><circle cx='2.2' cy='3' r='1.6' fill='#3a2a2a'/><path d='M0 5.6 L4.6 6.6' stroke='#e8b080' stroke-width='0.8'/></svg>
<div class="b" style='left:0px;top:10.1px;width:800px;height:1px;background:linear-gradient(90deg,#c3ccd8 0%,#c0cad6 45%,#b6cccf 60%,#b4cbcd 100%);'></div>
<div class="b" style='left:0px;top:11.1px;width:800px;height:13.9px;background:#fff;'></div>
<div class="b" style='left:0px;top:25px;width:800px;height:18.5px;background:#f0f0f0;'></div>
<div class="b" style='left:0px;top:24.6px;width:800px;height:0.7px;background:#e2e2e2;'></div>
<div class="b" style='left:0px;top:43.5px;width:99px;height:453.5px;background:#f6f6f6;'></div>
<div class="b" style='left:99px;top:43.5px;width:701px;height:17.5px;background:#f0f0f0;'></div>
<div class="b" style='left:99px;top:43.5px;width:27px;height:17.3px;background:#dadada;'></div>
<div class="b" style='left:99px;top:59.6px;width:27px;height:1.6px;background:#4a7ab5;'></div>
<div class="b" style='left:99px;top:60.6px;width:701px;height:0.8px;background:#e4e4e4;'></div>
<span class="t" style='left:8.80px;top:-1.56px;font-size:8.7px;line-height:11.31px;transform:scaleX(0.8453);color:#111;-webkit-text-stroke:0.12px #111;'>MeteoInfoMap - default.mip</span>
<span class="t" style='left:2.00px;top:13.60px;font-size:7.7px;line-height:10.01px;transform:scaleX(0.8000);-webkit-text-stroke:0.18px #000;'>项目(P)</span>
<span class="t" style='left:32.00px;top:13.60px;font-size:7.7px;line-height:10.01px;transform:scaleX(0.8468);-webkit-text-stroke:0.18px #000;'>编辑(E)</span>
<span class="t" style='left:62.50px;top:13.60px;font-size:7.7px;line-height:10.01px;transform:scaleX(0.8390);-webkit-text-stroke:0.18px #000;'>显示(V)</span>
<span class="t" style='left:93.00px;top:13.60px;font-size:7.7px;line-height:10.01px;transform:scaleX(0.8834);-webkit-text-stroke:0.18px #000;'>插入(I)</span>
<span class="t" style='left:121.70px;top:13.60px;font-size:7.7px;line-height:10.01px;transform:scaleX(0.8312);-webkit-text-stroke:0.18px #000;'>选择(S)</span>
<span class="t" style='left:152.50px;top:13.60px;font-size:7.7px;line-height:10.01px;transform:scaleX(0.8600);-webkit-text-stroke:0.18px #000;'>空间分析(G)</span>
<span class="t" style='left:197.50px;top:13.60px;font-size:7.7px;line-height:10.01px;transform:scaleX(0.8134);-webkit-text-stroke:0.18px #000;'>工具(T)</span>
<span class="t" style='left:227.50px;top:13.60px;font-size:7.7px;line-height:10.01px;transform:scaleX(0.8272);-webkit-text-stroke:0.18px #000;'>插件(L)</span>
<span class="t" style='left:257.50px;top:13.60px;font-size:7.7px;line-height:10.01px;transform:scaleX(0.8446);-webkit-text-stroke:0.18px #000;'>帮助(H)</span>
<span class="t" style='left:288.70px;top:13.60px;font-size:7.7px;line-height:10.01px;transform:scaleX(0.9121);-webkit-text-stroke:0.18px #000;'>TrajStat</span>
<span class="t" style='left:106.00px;top:47.36px;font-size:7.6px;line-height:9.88px;transform:scaleX(0.8428);'>地图</span>
<span class="t" style='left:132.50px;top:47.36px;font-size:7.6px;line-height:9.88px;transform:scaleX(0.8428);'>版面</span>
<div class="b" style='left:0px;top:63px;width:96.5px;height:8px;background:#3d67b0;'></div>
<svg width='5.4' height='5.4' viewBox='0 0 5.4 5.4' style='left:0.1px;top:45.20px'><rect x='0.4' y='0.4' width='4.6' height='4.6' fill='#fdfdfd' stroke='#777' stroke-width='0.8'/><path d='M1.1 2.7 H4.3' stroke='#333' stroke-width='0.8'/></svg>
<svg width='8.1' height='6.5' viewBox='0 0 9 7' style='left:7px;top:45.00px'><path d='M2.4 0.5 H8.4 L6.6 3.4 H0.6 Z' fill='#f4e84a' stroke='#3a3408' stroke-width='0.6'/><path d='M0.6 3.4 H6.6 V6.3 H0.6 Z' fill='#e6d42e' stroke='#3a3408' stroke-width='0.6'/><path d='M6.6 3.4 L8.4 0.5 V3.6 L6.6 6.3 Z' fill='#a89a18' stroke='#3a3408' stroke-width='0.6'/><path d='M0.6 4.8 H6.6' stroke='#3a3408' stroke-width='0.5'/></svg>
<span class="t" style='left:18.90px;top:42.59px;font-size:7.7px;line-height:10.01px;transform:scaleX(0.9363);font-weight:bold;'>New Map Frame</span>
<svg width='5.4' height='5.4' viewBox='0 0 5.4 5.4' style='left:8.1px;top:54.60px'><rect x='0.4' y='0.4' width='4.6' height='4.6' fill='#fdfdfd' stroke='#777' stroke-width='0.8'/><path d='M1.1 2.7 H4.3' stroke='#333' stroke-width='0.8'/></svg>
<svg width='6' height='6' viewBox='0 0 6 6' style='left:15.1px;top:54.40px'><rect x='0.4' y='0.4' width='5.2' height='5.2' fill='#fdfdfd' stroke='#505050' stroke-width='0.8'/><path d='M1.4 3.2 L2.6 4.6 L4.8 1.5' fill='none' stroke='#333' stroke-width='0.9'/></svg>
<span class="t" style='left:23.90px;top:52.70px;font-size:7.7px;line-height:10.01px;transform:scaleX(0.8164);color:#1a1a1a;'>CWT</span>
<svg width='5.4' height='5.4' viewBox='0 0 5.4 5.4' style='left:16.1px;top:64.00px'><rect x='0.4' y='0.4' width='4.6' height='4.6' fill='#fdfdfd' stroke='#777' stroke-width='0.8'/><path d='M1.1 2.7 H4.3' stroke='#333' stroke-width='0.8'/><path d='M2.7 1.1 V4.3' stroke='#333' stroke-width='0.8'/></svg>
<svg width='6' height='6' viewBox='0 0 6 6' style='left:23.1px;top:63.80px'><rect x='0.4' y='0.4' width='5.2' height='5.2' fill='#fdfdfd' stroke='#505050' stroke-width='0.8'/><path d='M1.4 3.2 L2.6 4.6 L4.8 1.5' fill='none' stroke='#333' stroke-width='0.9'/></svg>
<span class="t" style='left:32.20px;top:62.10px;font-size:7.7px;line-height:10.01px;transform:scaleX(0.9150);color:#16264a;'>2019-1.shp</span>
<svg width='5.4' height='5.4' viewBox='0 0 5.4 5.4' style='left:16.1px;top:73.40px'><rect x='0.4' y='0.4' width='4.6' height='4.6' fill='#fdfdfd' stroke='#777' stroke-width='0.8'/><path d='M1.1 2.7 H4.3' stroke='#333' stroke-width='0.8'/><path d='M2.7 1.1 V4.3' stroke='#333' stroke-width='0.8'/></svg>
<svg width='6' height='6' viewBox='0 0 6 6' style='left:23.1px;top:73.20px'><rect x='0.4' y='0.4' width='5.2' height='5.2' fill='#fdfdfd' stroke='#505050' stroke-width='0.8'/></svg>
<span class="t" style='left:32.20px;top:71.50px;font-size:7.7px;line-height:10.01px;transform:scaleX(0.8913);color:#1a1a1a;'>2019.shp</span>
<svg width='5.4' height='5.4' viewBox='0 0 5.4 5.4' style='left:16.1px;top:82.80px'><rect x='0.4' y='0.4' width='4.6' height='4.6' fill='#fdfdfd' stroke='#777' stroke-width='0.8'/><path d='M1.1 2.7 H4.3' stroke='#333' stroke-width='0.8'/><path d='M2.7 1.1 V4.3' stroke='#333' stroke-width='0.8'/></svg>
<svg width='6' height='6' viewBox='0 0 6 6' style='left:23.1px;top:82.60px'><rect x='0.4' y='0.4' width='5.2' height='5.2' fill='#fdfdfd' stroke='#505050' stroke-width='0.8'/></svg>
<span class="t" style='left:32.20px;top:80.90px;font-size:7.7px;line-height:10.01px;transform:scaleX(0.9242);color:#1a1a1a;'>2019winter.shp</span>
<svg width='5.4' height='5.4' viewBox='0 0 5.4 5.4' style='left:16.1px;top:92.20px'><rect x='0.4' y='0.4' width='4.6' height='4.6' fill='#fdfdfd' stroke='#777' stroke-width='0.8'/><path d='M1.1 2.7 H4.3' stroke='#333' stroke-width='0.8'/><path d='M2.7 1.1 V4.3' stroke='#333' stroke-width='0.8'/></svg>
<svg width='6' height='6' viewBox='0 0 6 6' style='left:23.1px;top:92.00px'><rect x='0.4' y='0.4' width='5.2' height='5.2' fill='#fdfdfd' stroke='#505050' stroke-width='0.8'/></svg>
<span class="t" style='left:32.20px;top:90.30px;font-size:7.7px;line-height:10.01px;transform:scaleX(0.9095);color:#1a1a1a;'>2019autumn.shp</span>
<svg width='5.4' height='5.4' viewBox='0 0 5.4 5.4' style='left:16.1px;top:101.60px'><rect x='0.4' y='0.4' width='4.6' height='4.6' fill='#fdfdfd' stroke='#777' stroke-width='0.8'/><path d='M1.1 2.7 H4.3' stroke='#333' stroke-width='0.8'/><path d='M2.7 1.1 V4.3' stroke='#333' stroke-width='0.8'/></svg>
<svg width='6' height='6' viewBox='0 0 6 6' style='left:23.1px;top:101.40px'><rect x='0.4' y='0.4' width='5.2' height='5.2' fill='#fdfdfd' stroke='#505050' stroke-width='0.8'/></svg>
<span class="t" style='left:32.20px;top:99.70px;font-size:7.7px;line-height:10.01px;transform:scaleX(0.9172);color:#1a1a1a;'>2019summer.shp</span>
<svg width='5.4' height='5.4' viewBox='0 0 5.4 5.4' style='left:16.1px;top:111.00px'><rect x='0.4' y='0.4' width='4.6' height='4.6' fill='#fdfdfd' stroke='#777' stroke-width='0.8'/><path d='M1.1 2.7 H4.3' stroke='#333' stroke-width='0.8'/><path d='M2.7 1.1 V4.3' stroke='#333' stroke-width='0.8'/></svg>
<svg width='6' height='6' viewBox='0 0 6 6' style='left:23.1px;top:110.80px'><rect x='0.4' y='0.4' width='5.2' height='5.2' fill='#fdfdfd' stroke='#505050' stroke-width='0.8'/></svg>
<span class="t" style='left:32.20px;top:109.10px;font-size:7.7px;line-height:10.01px;transform:scaleX(0.9281);color:#1a1a1a;'>2019spring.shp</span>
<svg width='5.4' height='5.4' viewBox='0 0 5.4 5.4' style='left:8.1px;top:120.40px'><rect x='0.4' y='0.4' width='4.6' height='4.6' fill='#fdfdfd' stroke='#777' stroke-width='0.8'/><path d='M1.1 2.7 H4.3' stroke='#333' stroke-width='0.8'/></svg>
<svg width='6' height='6' viewBox='0 0 6 6' style='left:15.1px;top:120.20px'><rect x='0.4' y='0.4' width='5.2' height='5.2' fill='#fdfdfd' stroke='#505050' stroke-width='0.8'/></svg>
<span class="t" style='left:23.90px;top:118.50px;font-size:7.7px;line-height:10.01px;transform:scaleX(0.7360);color:#1a1a1a;'>PSCF</span>
<svg width='5.4' height='5.4' viewBox='0 0 5.4 5.4' style='left:16.1px;top:129.80px'><rect x='0.4' y='0.4' width='4.6' height='4.6' fill='#fdfdfd' stroke='#777' stroke-width='0.8'/><path d='M1.1 2.7 H4.3' stroke='#333' stroke-width='0.8'/><path d='M2.7 1.1 V4.3' stroke='#333' stroke-width='0.8'/></svg>
<svg width='6' height='6' viewBox='0 0 6 6' style='left:23.1px;top:129.60px'><rect x='0.4' y='0.4' width='5.2' height='5.2' fill='#fdfdfd' stroke='#505050' stroke-width='0.8'/></svg>
<span class="t" style='left:32.20px;top:127.90px;font-size:7.7px;line-height:10.01px;transform:scaleX(0.8913);color:#1a1a1a;'>2019.shp</span>
<svg width='5.4' height='5.4' viewBox='0 0 5.4 5.4' style='left:16.1px;top:139.20px'><rect x='0.4' y='0.4' width='4.6' height='4.6' fill='#fdfdfd' stroke='#777' stroke-width='0.8'/><path d='M1.1 2.7 H4.3' stroke='#333' stroke-width='0.8'/><path d='M2.7 1.1 V4.3' stroke='#333' stroke-width='0.8'/></svg>
<svg width='6' height='6' viewBox='0 0 6 6' style='left:23.1px;top:139.00px'><rect x='0.4' y='0.4' width='5.2' height='5.2' fill='#fdfdfd' stroke='#505050' stroke-width='0.8'/></svg>
<span class="t" style='left:32.20px;top:137.29px;font-size:7.7px;line-height:10.01px;transform:scaleX(0.9242);color:#1a1a1a;'>2019winter.shp</span>
<svg width='5.4' height='5.4' viewBox='0 0 5.4 5.4' style='left:16.1px;top:148.60px'><rect x='0.4' y='0.4' width='4.6' height='4.6' fill='#fdfdfd' stroke='#777' stroke-width='0.8'/><path d='M1.1 2.7 H4.3' stroke='#333' stroke-width='0.8'/><path d='M2.7 1.1 V4.3' stroke='#333' stroke-width='0.8'/></svg>
<svg width='6' height='6' viewBox='0 0 6 6' style='left:23.1px;top:148.40px'><rect x='0.4' y='0.4' width='5.2' height='5.2' fill='#fdfdfd' stroke='#505050' stroke-width='0.8'/></svg>
<span class="t" style='left:32.20px;top:146.69px;font-size:7.7px;line-height:10.01px;transform:scaleX(0.9095);color:#1a1a1a;'>2019autumn.shp</span>
<svg width='5.4' height='5.4' viewBox='0 0 5.4 5.4' style='left:16.1px;top:158.00px'><rect x='0.4' y='0.4' width='4.6' height='4.6' fill='#fdfdfd' stroke='#777' stroke-width='0.8'/><path d='M1.1 2.7 H4.3' stroke='#333' stroke-width='0.8'/><path d='M2.7 1.1 V4.3' stroke='#333' stroke-width='0.8'/></svg>
<svg width='6' height='6' viewBox='0 0 6 6' style='left:23.1px;top:157.80px'><rect x='0.4' y='0.4' width='5.2' height='5.2' fill='#fdfdfd' stroke='#505050' stroke-width='0.8'/></svg>
<span class="t" style='left:32.20px;top:156.09px;font-size:7.7px;line-height:10.01px;transform:scaleX(0.9172);color:#1a1a1a;'>2019summer.shp</span>
<svg width='5.4' height='5.4' viewBox='0 0 5.4 5.4' style='left:16.1px;top:167.40px'><rect x='0.4' y='0.4' width='4.6' height='4.6' fill='#fdfdfd' stroke='#777' stroke-width='0.8'/><path d='M1.1 2.7 H4.3' stroke='#333' stroke-width='0.8'/><path d='M2.7 1.1 V4.3' stroke='#333' stroke-width='0.8'/></svg>
<svg width='6' height='6' viewBox='0 0 6 6' style='left:23.1px;top:167.20px'><rect x='0.4' y='0.4' width='5.2' height='5.2' fill='#fdfdfd' stroke='#505050' stroke-width='0.8'/></svg>
<span class="t" style='left:32.20px;top:165.50px;font-size:7.7px;line-height:10.01px;transform:scaleX(0.9281);color:#1a1a1a;'>2019spring.shp</span>
<svg width='5.4' height='5.4' viewBox='0 0 5.4 5.4' style='left:8.1px;top:176.80px'><rect x='0.4' y='0.4' width='4.6' height='4.6' fill='#fdfdfd' stroke='#777' stroke-width='0.8'/><path d='M1.1 2.7 H4.3' stroke='#333' stroke-width='0.8'/></svg>
<svg width='6' height='6' viewBox='0 0 6 6' style='left:15.1px;top:176.60px'><rect x='0.4' y='0.4' width='5.2' height='5.2' fill='#fdfdfd' stroke='#505050' stroke-width='0.8'/></svg>
<span class="t" style='left:23.90px;top:174.89px;font-size:7.7px;line-height:10.01px;transform:scaleX(0.8990);color:#1a1a1a;'>Cluster</span>
<svg width='5.4' height='5.4' viewBox='0 0 5.4 5.4' style='left:16.1px;top:186.20px'><rect x='0.4' y='0.4' width='4.6' height='4.6' fill='#fdfdfd' stroke='#777' stroke-width='0.8'/><path d='M1.1 2.7 H4.3' stroke='#333' stroke-width='0.8'/><path d='M2.7 1.1 V4.3' stroke='#333' stroke-width='0.8'/></svg>
<svg width='6' height='6' viewBox='0 0 6 6' style='left:23.1px;top:186.00px'><rect x='0.4' y='0.4' width='5.2' height='5.2' fill='#fdfdfd' stroke='#505050' stroke-width='0.8'/></svg>
<span class="t" style='left:32.20px;top:184.29px;font-size:7.7px;line-height:10.01px;transform:scaleX(0.8773);color:#1a1a1a;'>2019-1</span>
<svg width='5.4' height='5.4' viewBox='0 0 5.4 5.4' style='left:16.1px;top:195.60px'><rect x='0.4' y='0.4' width='4.6' height='4.6' fill='#fdfdfd' stroke='#777' stroke-width='0.8'/><path d='M1.1 2.7 H4.3' stroke='#333' stroke-width='0.8'/><path d='M2.7 1.1 V4.3' stroke='#333' stroke-width='0.8'/></svg>
<svg width='6' height='6' viewBox='0 0 6 6' style='left:23.1px;top:195.40px'><rect x='0.4' y='0.4' width='5.2' height='5.2' fill='#fdfdfd' stroke='#505050' stroke-width='0.8'/></svg>
<span class="t" style='left:32.20px;top:193.69px;font-size:7.7px;line-height:10.01px;transform:scaleX(0.8913);color:#1a1a1a;'>2019.shp</span>
<svg width='5.4' height='5.4' viewBox='0 0 5.4 5.4' style='left:16.1px;top:205.00px'><rect x='0.4' y='0.4' width='4.6' height='4.6' fill='#fdfdfd' stroke='#777' stroke-width='0.8'/><path d='M1.1 2.7 H4.3' stroke='#333' stroke-width='0.8'/><path d='M2.7 1.1 V4.3' stroke='#333' stroke-width='0.8'/></svg>
<svg width='6' height='6' viewBox='0 0 6 6' style='left:23.1px;top:204.80px'><rect x='0.4' y='0.4' width='5.2' height='5.2' fill='#fdfdfd' stroke='#505050' stroke-width='0.8'/></svg>
<span class="t" style='left:32.20px;top:203.09px;font-size:7.7px;line-height:10.01px;transform:scaleX(0.9242);color:#1a1a1a;'>2019winter.shp</span>
<svg width='5.4' height='5.4' viewBox='0 0 5.4 5.4' style='left:16.1px;top:214.40px'><rect x='0.4' y='0.4' width='4.6' height='4.6' fill='#fdfdfd' stroke='#777' stroke-width='0.8'/><path d='M1.1 2.7 H4.3' stroke='#333' stroke-width='0.8'/><path d='M2.7 1.1 V4.3' stroke='#333' stroke-width='0.8'/></svg>
<svg width='6' height='6' viewBox='0 0 6 6' style='left:23.1px;top:214.20px'><rect x='0.4' y='0.4' width='5.2' height='5.2' fill='#fdfdfd' stroke='#505050' stroke-width='0.8'/></svg>
<span class="t" style='left:32.20px;top:212.50px;font-size:7.7px;line-height:10.01px;transform:scaleX(0.9095);color:#1a1a1a;'>2019autumn.shp</span>
<svg width='5.4' height='5.4' viewBox='0 0 5.4 5.4' style='left:16.1px;top:223.80px'><rect x='0.4' y='0.4' width='4.6' height='4.6' fill='#fdfdfd' stroke='#777' stroke-width='0.8'/><path d='M1.1 2.7 H4.3' stroke='#333' stroke-width='0.8'/><path d='M2.7 1.1 V4.3' stroke='#333' stroke-width='0.8'/></svg>
<svg width='6' height='6' viewBox='0 0 6 6' style='left:23.1px;top:223.60px'><rect x='0.4' y='0.4' width='5.2' height='5.2' fill='#fdfdfd' stroke='#505050' stroke-width='0.8'/></svg>
<span class="t" style='left:32.20px;top:221.89px;font-size:7.7px;line-height:10.01px;transform:scaleX(0.9172);color:#1a1a1a;'>2019summer.shp</span>
<svg width='5.4' height='5.4' viewBox='0 0 5.4 5.4' style='left:16.1px;top:233.20px'><rect x='0.4' y='0.4' width='4.6' height='4.6' fill='#fdfdfd' stroke='#777' stroke-width='0.8'/><path d='M1.1 2.7 H4.3' stroke='#333' stroke-width='0.8'/><path d='M2.7 1.1 V4.3' stroke='#333' stroke-width='0.8'/></svg>
<svg width='6' height='6' viewBox='0 0 6 6' style='left:23.1px;top:233.00px'><rect x='0.4' y='0.4' width='5.2' height='5.2' fill='#fdfdfd' stroke='#505050' stroke-width='0.8'/></svg>
<span class="t" style='left:32.20px;top:231.29px;font-size:7.7px;line-height:10.01px;transform:scaleX(0.9281);color:#1a1a1a;'>2019spring.shp</span>
<svg width='5.4' height='5.4' viewBox='0 0 5.4 5.4' style='left:8.1px;top:242.60px'><rect x='0.4' y='0.4' width='4.6' height='4.6' fill='#fdfdfd' stroke='#777' stroke-width='0.8'/><path d='M1.1 2.7 H4.3' stroke='#333' stroke-width='0.8'/></svg>
<svg width='6' height='6' viewBox='0 0 6 6' style='left:15.1px;top:242.40px'><rect x='0.4' y='0.4' width='5.2' height='5.2' fill='#fdfdfd' stroke='#505050' stroke-width='0.8'/></svg>
<span class="t" style='left:23.90px;top:240.69px;font-size:7.7px;line-height:10.01px;transform:scaleX(0.9413);color:#1a1a1a;'>Trajectory</span>
<svg width='5.4' height='5.4' viewBox='0 0 5.4 5.4' style='left:16.1px;top:252.00px'><rect x='0.4' y='0.4' width='4.6' height='4.6' fill='#fdfdfd' stroke='#777' stroke-width='0.8'/><path d='M1.1 2.7 H4.3' stroke='#333' stroke-width='0.8'/><path d='M2.7 1.1 V4.3' stroke='#333' stroke-width='0.8'/></svg>
<svg width='6' height='6' viewBox='0 0 6 6' style='left:23.1px;top:251.80px'><rect x='0.4' y='0.4' width='5.2' height='5.2' fill='#fdfdfd' stroke='#505050' stroke-width='0.8'/></svg>
<span class="t" style='left:32.20px;top:250.09px;font-size:7.7px;line-height:10.01px;transform:scaleX(0.9150);color:#1a1a1a;'>2019-1.shp</span>
<svg width='5.4' height='5.4' viewBox='0 0 5.4 5.4' style='left:16.1px;top:261.40px'><rect x='0.4' y='0.4' width='4.6' height='4.6' fill='#fdfdfd' stroke='#777' stroke-width='0.8'/><path d='M1.1 2.7 H4.3' stroke='#333' stroke-width='0.8'/><path d='M2.7 1.1 V4.3' stroke='#333' stroke-width='0.8'/></svg>
<svg width='6' height='6' viewBox='0 0 6 6' style='left:23.1px;top:261.20px'><rect x='0.4' y='0.4' width='5.2' height='5.2' fill='#fdfdfd' stroke='#505050' stroke-width='0.8'/></svg>
<span class="t" style='left:32.20px;top:259.50px;font-size:7.7px;line-height:10.01px;transform:scaleX(0.8913);color:#1a1a1a;'>2019.shp</span>
<svg width='5.4' height='5.4' viewBox='0 0 5.4 5.4' style='left:16.1px;top:270.80px'><rect x='0.4' y='0.4' width='4.6' height='4.6' fill='#fdfdfd' stroke='#777' stroke-width='0.8'/><path d='M1.1 2.7 H4.3' stroke='#333' stroke-width='0.8'/><path d='M2.7 1.1 V4.3' stroke='#333' stroke-width='0.8'/></svg>
<svg width='6' height='6' viewBox='0 0 6 6' style='left:23.1px;top:270.60px'><rect x='0.4' y='0.4' width='5.2' height='5.2' fill='#fdfdfd' stroke='#505050' stroke-width='0.8'/></svg>
<span class="t" style='left:32.20px;top:268.90px;font-size:7.7px;line-height:10.01px;transform:scaleX(0.9242);color:#1a1a1a;'>2019winter.shp</span>
<svg width='5.4' height='5.4' viewBox='0 0 5.4 5.4' style='left:16.1px;top:280.20px'><rect x='0.4' y='0.4' width='4.6' height='4.6' fill='#fdfdfd' stroke='#777' stroke-width='0.8'/><path d='M1.1 2.7 H4.3' stroke='#333' stroke-width='0.8'/><path d='M2.7 1.1 V4.3' stroke='#333' stroke-width='0.8'/></svg>
<svg width='6' height='6' viewBox='0 0 6 6' style='left:23.1px;top:280.00px'><rect x='0.4' y='0.4' width='5.2' height='5.2' fill='#fdfdfd' stroke='#505050' stroke-width='0.8'/></svg>
<span class="t" style='left:32.20px;top:278.30px;font-size:7.7px;line-height:10.01px;transform:scaleX(0.9095);color:#1a1a1a;'>2019autumn.shp</span>
<svg width='5.4' height='5.4' viewBox='0 0 5.4 5.4' style='left:16.1px;top:289.60px'><rect x='0.4' y='0.4' width='4.6' height='4.6' fill='#fdfdfd' stroke='#777' stroke-width='0.8'/><path d='M1.1 2.7 H4.3' stroke='#333' stroke-width='0.8'/><path d='M2.7 1.1 V4.3' stroke='#333' stroke-width='0.8'/></svg>
<svg width='6' height='6' viewBox='0 0 6 6' style='left:23.1px;top:289.40px'><rect x='0.4' y='0.4' width='5.2' height='5.2' fill='#fdfdfd' stroke='#505050' stroke-width='0.8'/></svg>
<span class="t" style='left:32.20px;top:287.69px;font-size:7.7px;line-height:10.01px;transform:scaleX(0.9172);color:#1a1a1a;'>2019summer.shp</span>
<svg width='5.4' height='5.4' viewBox='0 0 5.4 5.4' style='left:16.1px;top:299.00px'><rect x='0.4' y='0.4' width='4.6' height='4.6' fill='#fdfdfd' stroke='#777' stroke-width='0.8'/><path d='M1.1 2.7 H4.3' stroke='#333' stroke-width='0.8'/><path d='M2.7 1.1 V4.3' stroke='#333' stroke-width='0.8'/></svg>
<svg width='6' height='6' viewBox='0 0 6 6' style='left:23.1px;top:298.80px'><rect x='0.4' y='0.4' width='5.2' height='5.2' fill='#fdfdfd' stroke='#505050' stroke-width='0.8'/></svg>
<span class="t" style='left:32.20px;top:297.10px;font-size:7.7px;line-height:10.01px;transform:scaleX(0.9281);color:#1a1a1a;'>2019spring.shp</span>
<svg width='5.4' height='5.4' viewBox='0 0 5.4 5.4' style='left:16.1px;top:308.40px'><rect x='0.4' y='0.4' width='4.6' height='4.6' fill='#fdfdfd' stroke='#777' stroke-width='0.8'/><path d='M1.1 2.7 H4.3' stroke='#333' stroke-width='0.8'/><path d='M2.7 1.1 V4.3' stroke='#333' stroke-width='0.8'/></svg>
<svg width='6' height='6' viewBox='0 0 6 6' style='left:23.1px;top:308.20px'><rect x='0.4' y='0.4' width='5.2' height='5.2' fill='#fdfdfd' stroke='#505050' stroke-width='0.8'/></svg>
<span class="t" style='left:32.20px;top:306.50px;font-size:7.7px;line-height:10.01px;transform:scaleX(0.8834);color:#1a1a1a;'>201901.shp</span>
<svg width='5.4' height='5.4' viewBox='0 0 5.4 5.4' style='left:16.1px;top:317.80px'><rect x='0.4' y='0.4' width='4.6' height='4.6' fill='#fdfdfd' stroke='#777' stroke-width='0.8'/><path d='M1.1 2.7 H4.3' stroke='#333' stroke-width='0.8'/><path d='M2.7 1.1 V4.3' stroke='#333' stroke-width='0.8'/></svg>
<svg width='6' height='6' viewBox='0 0 6 6' style='left:23.1px;top:317.60px'><rect x='0.4' y='0.4' width='5.2' height='5.2' fill='#fdfdfd' stroke='#505050' stroke-width='0.8'/></svg>
<span class="t" style='left:32.20px;top:315.90px;font-size:7.7px;line-height:10.01px;transform:scaleX(0.8834);color:#1a1a1a;'>201902.shp</span>
<svg width='5.4' height='5.4' viewBox='0 0 5.4 5.4' style='left:16.1px;top:327.20px'><rect x='0.4' y='0.4' width='4.6' height='4.6' fill='#fdfdfd' stroke='#777' stroke-width='0.8'/><path d='M1.1 2.7 H4.3' stroke='#333' stroke-width='0.8'/><path d='M2.7 1.1 V4.3' stroke='#333' stroke-width='0.8'/></svg>
<svg width='6' height='6' viewBox='0 0 6 6' style='left:23.1px;top:327.00px'><rect x='0.4' y='0.4' width='5.2' height='5.2' fill='#fdfdfd' stroke='#505050' stroke-width='0.8'/></svg>
<span class="t" style='left:32.20px;top:325.30px;font-size:7.7px;line-height:10.01px;transform:scaleX(0.8834);color:#1a1a1a;'>201903.shp</span>
<svg width='5.4' height='5.4' viewBox='0 0 5.4 5.4' style='left:16.1px;top:336.60px'><rect x='0.4' y='0.4' width='4.6' height='4.6' fill='#fdfdfd' stroke='#777' stroke-width='0.8'/><path d='M1.1 2.7 H4.3' stroke='#333' stroke-width='0.8'/><path d='M2.7 1.1 V4.3' stroke='#333' stroke-width='0.8'/></svg>
<svg width='6' height='6' viewBox='0 0 6 6' style='left:23.1px;top:336.40px'><rect x='0.4' y='0.4' width='5.2' height='5.2' fill='#fdfdfd' stroke='#505050' stroke-width='0.8'/></svg>
<span class="t" style='left:32.20px;top:334.70px;font-size:7.7px;line-height:10.01px;transform:scaleX(0.8834);color:#1a1a1a;'>201904.shp</span>
<svg width='5.4' height='5.4' viewBox='0 0 5.4 5.4' style='left:16.1px;top:346.00px'><rect x='0.4' y='0.4' width='4.6' height='4.6' fill='#fdfdfd' stroke='#777' stroke-width='0.8'/><path d='M1.1 2.7 H4.3' stroke='#333' stroke-width='0.8'/><path d='M2.7 1.1 V4.3' stroke='#333' stroke-width='0.8'/></svg>
<svg width='6' height='6' viewBox='0 0 6 6' style='left:23.1px;top:345.80px'><rect x='0.4' y='0.4' width='5.2' height='5.2' fill='#fdfdfd' stroke='#505050' stroke-width='0.8'/></svg>
<span class="t" style='left:32.20px;top:344.10px;font-size:7.7px;line-height:10.01px;transform:scaleX(0.8834);color:#1a1a1a;'>201905.shp</span>
<svg width='5.4' height='5.4' viewBox='0 0 5.4 5.4' style='left:16.1px;top:355.40px'><rect x='0.4' y='0.4' width='4.6' height='4.6' fill='#fdfdfd' stroke='#777' stroke-width='0.8'/><path d='M1.1 2.7 H4.3' stroke='#333' stroke-width='0.8'/><path d='M2.7 1.1 V4.3' stroke='#333' stroke-width='0.8'/></svg>
<svg width='6' height='6' viewBox='0 0 6 6' style='left:23.1px;top:355.20px'><rect x='0.4' y='0.4' width='5.2' height='5.2' fill='#fdfdfd' stroke='#505050' stroke-width='0.8'/></svg>
<span class="t" style='left:32.20px;top:353.50px;font-size:7.7px;line-height:10.01px;transform:scaleX(0.8834);color:#1a1a1a;'>201906.shp</span>
<svg width='5.4' height='5.4' viewBox='0 0 5.4 5.4' style='left:16.1px;top:364.80px'><rect x='0.4' y='0.4' width='4.6' height='4.6' fill='#fdfdfd' stroke='#777' stroke-width='0.8'/><path d='M1.1 2.7 H4.3' stroke='#333' stroke-width='0.8'/><path d='M2.7 1.1 V4.3' stroke='#333' stroke-width='0.8'/></svg>
<svg width='6' height='6' viewBox='0 0 6 6' style='left:23.1px;top:364.60px'><rect x='0.4' y='0.4' width='5.2' height='5.2' fill='#fdfdfd' stroke='#505050' stroke-width='0.8'/></svg>
<span class="t" style='left:32.20px;top:362.90px;font-size:7.7px;line-height:10.01px;transform:scaleX(0.8834);color:#1a1a1a;'>201907.shp</span>
<svg width='5.4' height='5.4' viewBox='0 0 5.4 5.4' style='left:16.1px;top:374.20px'><rect x='0.4' y='0.4' width='4.6' height='4.6' fill='#fdfdfd' stroke='#777' stroke-width='0.8'/><path d='M1.1 2.7 H4.3' stroke='#333' stroke-width='0.8'/><path d='M2.7 1.1 V4.3' stroke='#333' stroke-width='0.8'/></svg>
<svg width='6' height='6' viewBox='0 0 6 6' style='left:23.1px;top:374.00px'><rect x='0.4' y='0.4' width='5.2' height='5.2' fill='#fdfdfd' stroke='#505050' stroke-width='0.8'/></svg>
<span class="t" style='left:32.20px;top:372.30px;font-size:7.7px;line-height:10.01px;transform:scaleX(0.8834);color:#1a1a1a;'>201908.shp</span>
<svg width='5.4' height='5.4' viewBox='0 0 5.4 5.4' style='left:16.1px;top:383.60px'><rect x='0.4' y='0.4' width='4.6' height='4.6' fill='#fdfdfd' stroke='#777' stroke-width='0.8'/><path d='M1.1 2.7 H4.3' stroke='#333' stroke-width='0.8'/><path d='M2.7 1.1 V4.3' stroke='#333' stroke-width='0.8'/></svg>
<svg width='6' height='6' viewBox='0 0 6 6' style='left:23.1px;top:383.40px'><rect x='0.4' y='0.4' width='5.2' height='5.2' fill='#fdfdfd' stroke='#505050' stroke-width='0.8'/></svg>
<span class="t" style='left:32.20px;top:381.70px;font-size:7.7px;line-height:10.01px;transform:scaleX(0.8834);color:#1a1a1a;'>201909.shp</span>
<svg width='5.4' height='5.4' viewBox='0 0 5.4 5.4' style='left:16.1px;top:393.00px'><rect x='0.4' y='0.4' width='4.6' height='4.6' fill='#fdfdfd' stroke='#777' stroke-width='0.8'/><path d='M1.1 2.7 H4.3' stroke='#333' stroke-width='0.8'/><path d='M2.7 1.1 V4.3' stroke='#333' stroke-width='0.8'/></svg>
<svg width='6' height='6' viewBox='0 0 6 6' style='left:23.1px;top:392.80px'><rect x='0.4' y='0.4' width='5.2' height='5.2' fill='#fdfdfd' stroke='#505050' stroke-width='0.8'/></svg>
<span class="t" style='left:32.20px;top:391.10px;font-size:7.7px;line-height:10.01px;transform:scaleX(0.8834);color:#1a1a1a;'>201910.shp</span>
<svg width='5.4' height='5.4' viewBox='0 0 5.4 5.4' style='left:16.1px;top:402.40px'><rect x='0.4' y='0.4' width='4.6' height='4.6' fill='#fdfdfd' stroke='#777' stroke-width='0.8'/><path d='M1.1 2.7 H4.3' stroke='#333' stroke-width='0.8'/></svg>
<svg width='6' height='6' viewBox='0 0 6 6' style='left:23.1px;top:402.20px'><rect x='0.4' y='0.4' width='5.2' height='5.2' fill='#fdfdfd' stroke='#505050' stroke-width='0.8'/></svg>
<span class="t" style='left:32.20px;top:400.50px;font-size:7.7px;line-height:10.01px;transform:scaleX(0.8959);color:#1a1a1a;'>201911.shp</span>
<svg width='20' height='8' viewBox='0 0 20 8' style='left:28px;top:410.20px'><path d='M1 6.2 L5.6 1.6 L10 6.2 L14.8 1.6' fill='none' stroke='#333' stroke-width='0.8'/></svg>
<svg width='5.4' height='5.4' viewBox='0 0 5.4 5.4' style='left:16.1px;top:421.20px'><rect x='0.4' y='0.4' width='4.6' height='4.6' fill='#fdfdfd' stroke='#777' stroke-width='0.8'/><path d='M1.1 2.7 H4.3' stroke='#333' stroke-width='0.8'/><path d='M2.7 1.1 V4.3' stroke='#333' stroke-width='0.8'/></svg>
<svg width='6' height='6' viewBox='0 0 6 6' style='left:23.1px;top:421.00px'><rect x='0.4' y='0.4' width='5.2' height='5.2' fill='#fdfdfd' stroke='#505050' stroke-width='0.8'/></svg>
<span class="t" style='left:32.20px;top:419.30px;font-size:7.7px;line-height:10.01px;transform:scaleX(0.8834);color:#1a1a1a;'>201912.shp</span>
<svg width='5.4' height='5.4' viewBox='0 0 5.4 5.4' style='left:8.1px;top:430.60px'><rect x='0.4' y='0.4' width='4.6' height='4.6' fill='#fdfdfd' stroke='#777' stroke-width='0.8'/><path d='M1.1 2.7 H4.3' stroke='#333' stroke-width='0.8'/></svg>
<svg width='6' height='6' viewBox='0 0 6 6' style='left:15.1px;top:430.40px'><rect x='0.4' y='0.4' width='5.2' height='5.2' fill='#fdfdfd' stroke='#505050' stroke-width='0.8'/><path d='M1.4 3.2 L2.6 4.6 L4.8 1.5' fill='none' stroke='#333' stroke-width='0.9'/></svg>
<span class="t" style='left:23.90px;top:428.70px;font-size:7.7px;line-height:10.01px;transform:scaleX(0.9318);color:#1a1a1a;'>country.shp</span>
<div class="b" style='left:20.3px;top:439.20000000000005px;width:15px;height:6.2px;background:#fff;border:0.8px solid #333;'></div>
<svg width='5.4' height='5.4' viewBox='0 0 5.4 5.4' style='left:8.1px;top:449.40px'><rect x='0.4' y='0.4' width='4.6' height='4.6' fill='#fdfdfd' stroke='#777' stroke-width='0.8'/><path d='M1.1 2.7 H4.3' stroke='#333' stroke-width='0.8'/><path d='M2.7 1.1 V4.3' stroke='#333' stroke-width='0.8'/></svg>
<svg width='6' height='6' viewBox='0 0 6 6' style='left:15.1px;top:449.20px'><rect x='0.4' y='0.4' width='5.2' height='5.2' fill='#fdfdfd' stroke='#505050' stroke-width='0.8'/><path d='M1.4 3.2 L2.6 4.6 L4.8 1.5' fill='none' stroke='#333' stroke-width='0.9'/></svg>
<span class="t" style='left:23.90px;top:447.50px;font-size:7.7px;line-height:10.01px;transform:scaleX(0.8985);color:#1a1a1a;'>cn_province.shp</span>
<svg width='2' height='9.5' viewBox='0 0 2 9.5' style='left:0.3px;top:29.5px'><rect x='0.3' y='0.3' width='0.9' height='0.8' fill='#a8a8a8'/><rect x='0.3' y='1.9' width='0.9' height='0.8' fill='#a8a8a8'/><rect x='0.3' y='3.5' width='0.9' height='0.8' fill='#a8a8a8'/><rect x='0.3' y='5.1' width='0.9' height='0.8' fill='#a8a8a8'/><rect x='0.3' y='6.7' width='0.9' height='0.8' fill='#a8a8a8'/></svg>
<svg width='9.2' height='9.2' viewBox='0 0 9.2 9.2' style='left:5px;top:29.2px'><path d='M3.2 0.6 H6 V3.2 H8.6 V6 H6 V8.6 H3.2 V6 H0.6 V3.2 H3.2 Z' fill='#2b52ae' stroke='#182e6c' stroke-width='0.8'/><path d='M3.7 1.3 H5 V3.7 H3.7Z' fill='#6d9be8' opacity='.45'/></svg>
<svg width='9' height='8.6' viewBox='0 0 9 8.6' style='left:19.6px;top:29.6px'><path d='M0.5 8 V2.2 H2.2 L2.9 1.3 H5 V2.2 H6.4 V3.6' fill='#c8b840' stroke='#3a340a' stroke-width='0.8'/><path d='M0.5 8 L2.2 3.8 H8.6 L6.8 8 Z' fill='#e8dc6a' stroke='#3a340a' stroke-width='0.8'/><path d='M5.6 1.4 C6.6 0.4 7.6 0.5 8.2 1.4' fill='none' stroke='#333' stroke-width='0.6'/><path d='M8.5 0.6 L8.3 1.9 L7.2 1.4Z' fill='#333'/></svg>
<svg width='8.6' height='8.6' viewBox='0 0 8.6 8.6' style='left:33.9px;top:29.4px'><path d='M1.6 1.6 L7 7 M7 1.6 L1.6 7' stroke='#e4461f' stroke-width='2.8' stroke-linecap='round'/><path d='M1.6 1.6 L4.4 4.4' stroke='#f58a6a' stroke-width='0.9' stroke-linecap='round'/></svg>
<div class="b" style='left:47px;top:28px;width:0.8px;height:12.5px;background:#d6d6d6;'></div>
<svg width='6.6' height='9.4' viewBox='0 0 6.6 9.4' style='left:53.8px;top:29.4px'><path d='M0.6 0.6 V7.4 L2.2 5.9 L3.5 8.8 L4.6 8.3 L3.3 5.5 L5.6 5.4 Z' fill='#fff' stroke='#1a1a1a' stroke-width='0.8' stroke-linejoin='round'/></svg>
<svg width='9.2' height='9.2' viewBox='0 0 9.2 9.2' style='left:66px;top:29.3px'><circle cx='3.2' cy='3.2' r='2.6' fill='#dfe6fa' stroke='#3b5fc0' stroke-width='0.9'/><path d='M5.2 5.2 L8.4 8.4' stroke='#c9a248' stroke-width='1.6' stroke-linecap='round'/><path d='M1.8 3.2 H4.6' stroke='#3050b0' stroke-width='0.8'/><path d='M3.2 1.8 V4.6' stroke='#3050b0' stroke-width='0.8'/></svg>
<svg width='9.2' height='9.2' viewBox='0 0 9.2 9.2' style='left:80px;top:29.3px'><circle cx='3.2' cy='3.2' r='2.6' fill='#dfe6fa' stroke='#3b5fc0' stroke-width='0.9'/><path d='M5.2 5.2 L8.4 8.4' stroke='#c9a248' stroke-width='1.6' stroke-linecap='round'/><path d='M1.8 3.2 H4.6' stroke='#3050b0' stroke-width='0.8'/></svg>
<svg width='9.8' height='9.6' viewBox='0 0 9.8 9.6' style='left:94.6px;top:29.2px'><g stroke='#2a5cc0' stroke-width='1.5' stroke-linecap='round' fill='none'><path d='M1.3 4.6 V1.8'/><path d='M3.3 4.4 V1'/><path d='M5.4 4.4 V1'/><path d='M7.4 4.8 V1.9'/><path d='M8.9 4.6 L7.6 6.4'/></g><path d='M0.6 4.2 H8 L7.6 7 C7 8.6 5.6 9.2 4.4 9.2 C2.6 9.2 1.2 8 0.8 6.4 Z' fill='#2a5cc0'/></svg>
<svg width='9.2' height='9.2' viewBox='0 0 9.2 9.2' style='left:109px;top:29.3px'><defs><radialGradient id='gl' cx='.35' cy='.3' r='.8'><stop offset='0' stop-color='#5fb3e8'/><stop offset='.5' stop-color='#1d6fb0'/><stop offset='1' stop-color='#0b2f5c'/></radialGradient></defs><circle cx='4.6' cy='4.6' r='4.2' fill='url(#gl)' stroke='#0c2a50' stroke-width='0.5'/><path d='M2.2 2.6 C3 1.4 4.8 1.2 5.6 2 C6 3 5 3.6 4.4 4.4 C3.8 5.4 4.6 6.4 3.8 7 C2.8 6.4 2.6 5 2 4.2 Z' fill='#3fae4a' opacity='.9'/><path d='M6.2 4.6 C7 4.4 7.8 5 7.4 6 C7 6.8 6.2 6.6 6 5.8Z' fill='#3fae4a' opacity='.85'/></svg>
<svg width='9' height='9.2' viewBox='0 0 9 9.2' style='left:124px;top:29.4px'><circle cx='3.3' cy='3.3' r='2.7' fill='#f4f8fb' stroke='#333' stroke-width='0.9'/><path d='M5.3 5.4 L8.2 8.4' stroke='#222' stroke-width='1.5' stroke-linecap='round'/></svg>
<svg width='9.4' height='9.4' viewBox='0 0 9.4 9.4' style='left:138px;top:29.4px'><rect x='0.5' y='0.5' width='7.2' height='7.2' fill='#f6f6f6' stroke='#444' stroke-width='0.8'/><circle cx='4.2' cy='4' r='2.2' fill='#e6ecf2' stroke='#555' stroke-width='0.8'/><path d='M5.8 5.8 L8.6 8.8' stroke='#222' stroke-width='1.4' stroke-linecap='round'/></svg>
<svg width='9.2' height='7.2' viewBox='0 0 9.2 7.2' style='left:153px;top:30.4px'><path d='M0.5 3.6 L4.2 0.5 V2.2 H8.7 V5 H4.2 V6.7 Z' fill='#3f86d6' stroke='#1c4c8c' stroke-width='0.6' stroke-linejoin='round'/></svg>
<svg width='9.2' height='7.2' viewBox='0 0 9.2 7.2' style='left:166.4px;top:30.4px'><path d='M8.7 3.6 L5 0.5 V2.2 H0.5 V5 H5 V6.7 Z' fill='#c4c4c4' stroke='#b0b0b0' stroke-width='0.5' stroke-linejoin='round'/></svg>
<svg width='9.6' height='9.6' viewBox='0 0 9.6 9.6' style='left:180.6px;top:29.2px'><defs><radialGradient id='inf' cx='.4' cy='.3' r='.8'><stop offset='0' stop-color='#5e97ea'/><stop offset='1' stop-color='#1c49a8'/></radialGradient></defs><circle cx='4.8' cy='4.8' r='4.4' fill='url(#inf)' stroke='#163a8a' stroke-width='0.5'/><circle cx='4.8' cy='2.5' r='0.85' fill='#fff'/><path d='M3.8 4 H5.5 V7 H6.1 V7.7 H3.7 V7 H4.3 V4.7 H3.8Z' fill='#fff'/></svg>
<div class="b" style='left:194.2px;top:28px;width:0.8px;height:12.5px;background:#d6d6d6;'></div>
<svg width='7.6' height='6' viewBox='0 0 7.6 6' style='left:200px;top:31.2px'><rect x='0.5' y='0.5' width='6.6' height='5' fill='none' stroke='#222' stroke-width='0.9' stroke-dasharray='1.6 1'/></svg>
<svg width='3.8' height='2.4' viewBox='0 0 3.8 2.4' style='left:209.4px;top:32.8px'><path d='M0 0.2 H3.8 L1.9 2.3Z' fill='#222'/></svg>
<svg width='9.6' height='9.6' viewBox='0 0 9.6 9.6' style='left:220px;top:29.2px'><path d='M0.6 1 L3 0.5 V9 L0.6 8.4Z' fill='#9a9a9a' stroke='#666' stroke-width='0.4'/><text x='6.2' y='8.6' font-family='Liberation Sans, sans-serif' font-weight='bold' font-size='10.5' text-anchor='middle' fill='#2a5fc4' stroke='#1c3f90' stroke-width='0.3'>?</text></svg>
<svg width='10' height='6.4' viewBox='0 0 10 6.4' style='left:234.6px;top:30.6px'><path d='M0.5 3.2 L2.6 0.6 H9.4 V5.8 H2.6 Z' fill='#e8dc30' stroke='#6a6210' stroke-width='0.6'/><rect x='4.2' y='2' width='3.6' height='2.4' fill='#4a4410'/><path d='M5 3.2 H7' stroke='#e8dc30' stroke-width='0.6'/></svg>
<div class="b" style='left:248.4px;top:28px;width:0.8px;height:12.5px;background:#d6d6d6;'></div>
<svg width='10.2' height='9.2' viewBox='0 0 10.2 9.2' style='left:252.4px;top:29.4px'><rect x='0.6' y='0.6' width='7.2' height='8' fill='#f4f6f4' stroke='#b8bcc0' stroke-width='0.6'/><rect x='0.9' y='0.9' width='6.6' height='1.5' fill='#c8d4e8'/><path d='M1.8 4.4 L3.6 6 L5.4 3.2' fill='none' stroke='#58b04a' stroke-width='1.1'/><path d='M3.6 8 L4.2 6.2 L8.4 2.4 L9.8 3.8 L5.6 7.6 Z' fill='#e8a23a' stroke='#9c5a1a' stroke-width='0.4'/><path d='M8.4 2.4 L9.1 1.8 L10.1 3 L9.8 3.8Z' fill='#e05a5a'/></svg>
<svg width='2' height='9.5' viewBox='0 0 2 9.5' style='left:268.4px;top:29.5px'><rect x='0.3' y='0.3' width='0.9' height='0.8' fill='#a8a8a8'/><rect x='0.3' y='1.9' width='0.9' height='0.8' fill='#a8a8a8'/><rect x='0.3' y='3.5' width='0.9' height='0.8' fill='#a8a8a8'/><rect x='0.3' y='5.1' width='0.9' height='0.8' fill='#a8a8a8'/><rect x='0.3' y='6.7' width='0.9' height='0.8' fill='#a8a8a8'/></svg>
<svg width='10' height='9' viewBox='0 0 10 9' style='left:273px;top:29.6px'><text x='5' y='8.6' font-family='Liberation Serif, serif' font-size='10.8' text-anchor='middle' fill='#111' stroke='#111' stroke-width='0.3'>A</text></svg>
<svg width='3.2' height='3.2' viewBox='0 0 3.2 3.2' style='left:290.2px;top:32.2px'><circle cx='1.6' cy='1.6' r='1.45' fill='#111'/></svg>
<svg width='9' height='7.2' viewBox='0 0 9 7.2' style='left:301.8px;top:30.6px'><path d='M0.6 6.6 V1.8 L4.6 0.6 L8.4 3 V6.6 H0.6' fill='#f4f6fb' stroke='#6f8fb8' stroke-width='0.8'/></svg>
<svg width='8' height='9' viewBox='0 0 8 9' style='left:316.6px;top:29.6px'><path d='M0.6 1.2 C2 0.2 3.4 0.6 2.8 2 C2.2 3.2 1.6 4 3 4.2 C4.6 4.4 5.6 3.4 5.2 5 C4.8 6.6 4 7.4 5.4 7.8 C6.4 8 7 7.4 7.4 6.8' fill='none' stroke='#6f8fb8' stroke-width='0.8'/><path d='M1.6 0.6 L3.8 2.4' stroke='#6f8fb8' stroke-width='0.6'/></svg>
<svg width='9.6' height='7.6' viewBox='0 0 9.6 7.6' style='left:330.4px;top:30.4px'><path d='M0.6 6 C1.4 7.8 3.2 7 3.6 4.6 C4 2.2 4.6 0.4 6.4 0.8 C8 1.2 8.6 2.6 8.8 4' fill='none' stroke='#4c6c98' stroke-width='1'/></svg>
<svg width='9' height='7.4' viewBox='0 0 9 7.4' style='left:345px;top:30.4px'><defs><linearGradient id='pg' x1='0' y1='0' x2='1' y2='1'><stop offset='0' stop-color='#ffffff'/><stop offset='1' stop-color='#aeb8dc'/></linearGradient></defs><path d='M0.6 6.8 V3.6 L4 0.6 L6.6 1.4 L8.4 4.2 V6.8 Z' fill='url(#pg)' stroke='#445a8a' stroke-width='0.8'/></svg>
<svg width='7.6' height='6.8' viewBox='0 0 7.6 6.8' style='left:360px;top:30.8px'><ellipse cx='3.8' cy='3.4' rx='3.4' ry='2.4' transform='rotate(28 3.8 3.4)' fill='url(#pg)' stroke='#50649a' stroke-width='0.8'/></svg>
<svg width='8.4' height='6.8' viewBox='0 0 8.4 6.8' style='left:374px;top:30.8px'><rect x='0.5' y='0.5' width='7.4' height='5.8' fill='url(#pg)' stroke='#3c4f88' stroke-width='0.9'/></svg>
<svg width='9' height='9' viewBox='0 0 9 9' style='left:388px;top:29.8px'><circle cx='4.5' cy='4.5' r='4' fill='url(#pg)' stroke='#50649a' stroke-width='0.8'/><circle cx='4.5' cy='4.7' r='0.7' fill='#222'/></svg>
<svg width='8.8' height='7.2' viewBox='0 0 8.8 7.2' style='left:402.6px;top:30.6px'><ellipse cx='4.4' cy='3.6' rx='3.9' ry='3' fill='url(#pg)' stroke='#50649a' stroke-width='0.8'/></svg>
<svg width='9.2' height='8.2' viewBox='0 0 9.2 8.2' style='left:416.8px;top:29.8px'><path d='M0.9 7.4 V3 L4.6 0.8 L8.2 4.2 V7.4 Z' fill='none' stroke='#777' stroke-width='0.8'/><rect x='0.30000000000000004' y='6.800000000000001' width='1.2' height='1.2' fill='#777'/><rect x='0.30000000000000004' y='2.4' width='1.2' height='1.2' fill='#777'/><rect x='3.9999999999999996' y='0.20000000000000007' width='1.2' height='1.2' fill='#777'/><rect x='7.6' y='3.6' width='1.2' height='1.2' fill='#777'/><rect x='7.6' y='6.800000000000001' width='1.2' height='1.2' fill='#777'/></svg>
<svg width='2' height='9.5' viewBox='0 0 2 9.5' style='left:432.6px;top:29.5px'><rect x='0.3' y='0.3' width='0.9' height='0.8' fill='#a8a8a8'/><rect x='0.3' y='1.9' width='0.9' height='0.8' fill='#a8a8a8'/><rect x='0.3' y='3.5' width='0.9' height='0.8' fill='#a8a8a8'/><rect x='0.3' y='5.1' width='0.9' height='0.8' fill='#a8a8a8'/><rect x='0.3' y='6.7' width='0.9' height='0.8' fill='#a8a8a8'/></svg>
<svg width='8' height='9' viewBox='0 0 8 9' style='left:437.8px;top:29.8px'><path d='M0.5 0.5 H5.6 L7.5 2.4 V8.5 H0.5Z' fill='#cfcfcf' stroke='#bdbdbd' stroke-width='0.6'/></svg>
<svg width='9.4' height='9' viewBox='0 0 9.4 9' style='left:451.2px;top:29.8px'><rect x='0.5' y='0.5' width='8.4' height='8' fill='#c6c6c6' stroke='#b4b4b4' stroke-width='0.6'/><circle cx='5.4' cy='3.4' r='1.8' fill='#dcdcdc' stroke='#a8a8a8' stroke-width='0.6'/><path d='M4.2 4.8 L1.8 7.4' stroke='#a8a8a8' stroke-width='1'/></svg>
<svg width='9.4' height='9' viewBox='0 0 9.4 9' style='left:465.4px;top:29.8px'><rect x='0.5' y='0.5' width='8.4' height='8' fill='#c6c6c6' stroke='#b4b4b4' stroke-width='0.6'/><path d='M2 2.4 H6.6 M6.6 2.4 C5 4 3.6 5.4 1.8 7.4' fill='none' stroke='#a4a4a4' stroke-width='0.9'/></svg>
<svg width='9.4' height='9' viewBox='0 0 9.4 9' style='left:480px;top:29.8px'><rect x='0.5' y='0.5' width='8.4' height='8' fill='#c6c6c6' stroke='#b4b4b4' stroke-width='0.6' stroke-dasharray='1.4 0.8'/><circle cx='4.8' cy='4.4' r='2.2' fill='#d8d8d8' stroke='#aaa' stroke-width='0.6'/></svg>
<div class="b" style='left:492.2px;top:27.8px;width:43.4px;height:12.8px;background:#f3f3f3;border:0.7px solid #d2d2d2;'></div>
<div class="b" style='left:523px;top:27.8px;width:0.7px;height:12.8px;background:#d2d2d2;'></div>
<svg width='5.2' height='3' viewBox='0 0 5.2 3' style='left:527px;top:32.8px'><path d='M0.4 0.4 L2.6 2.5 L4.8 0.4' fill='none' stroke='#9a9a9a' stroke-width='0.7'/></svg>
<span class="t" style='left:496.20px;top:29.36px;font-size:7.6px;line-height:9.88px;transform:scaleX(0.8643);color:#8a8a8a;'>100%</span>
<svg width='2' height='9.5' viewBox='0 0 2 9.5' style='left:540.2px;top:29.5px'><rect x='0.3' y='0.3' width='0.9' height='0.8' fill='#a8a8a8'/><rect x='0.3' y='1.9' width='0.9' height='0.8' fill='#a8a8a8'/><rect x='0.3' y='3.5' width='0.9' height='0.8' fill='#a8a8a8'/><rect x='0.3' y='5.1' width='0.9' height='0.8' fill='#a8a8a8'/><rect x='0.3' y='6.7' width='0.9' height='0.8' fill='#a8a8a8'/></svg>
<svg width='9.2' height='9.4' viewBox='0 0 9.2 9.4' style='left:545px;top:29.4px'><path d='M0.6 8.8 L1.2 6.4 L6.4 1.2 L8.2 3 L3 8.2 Z' fill='#3a74d0' stroke='#1c4690' stroke-width='0.5'/><path d='M6.4 1.2 L7.4 0.3 L9 1.9 L8.2 3Z' fill='#e0523a'/><path d='M0.6 8.8 L1.2 6.4 L3 8.2Z' fill='#f0c060'/></svg>
<svg width='8' height='8.4' viewBox='0 0 8 8.4' style='left:560px;top:30px'><path d='M0.5 0.5 H7.5 V7.9 H0.5Z' fill='#b4b4b4' stroke='#a8a8a8' stroke-width='0.5'/><rect x='1.8' y='0.9' width='4.4' height='3' fill='#d4d4d4'/><rect x='2' y='5.2' width='4' height='2.7' fill='#8c8c8c'/><rect x='2.8' y='5.8' width='1' height='1.6' fill='#d0d0d0'/></svg>
<div class="b" style='left:572.2px;top:28px;width:0.8px;height:12.5px;background:#d6d6d6;'></div>
<svg width='8.6' height='8' viewBox='0 0 8.6 8' style='left:577.4px;top:30.2px'><path d='M0.5 0.5 L8 3 L4.6 4 L3.4 7.6 Z' fill='#909090' stroke='#888' stroke-width='0.4' stroke-linejoin='round'/></svg>
<svg width='9' height='9.2' viewBox='0 0 9 9.2' style='left:591.2px;top:29.6px'><path d='M2.6 0.5 H7 L8.5 2 V8.7 H2.6Z' fill='#b9b9b9' stroke='#a6a6a6' stroke-width='0.5'/><path d='M0.5 3.6 H4.4 V6.6 H0.5Z' fill='#a2a2a2'/><path d='M3.6 4.4 H6.6 M3.6 5.6 H6.6' stroke='#d8d8d8' stroke-width='0.5'/></svg>
<svg width='8.8' height='8.4' viewBox='0 0 8.8 8.4' style='left:605.6px;top:30px'><path d='M1.4 1.4 L7.4 7 M7.4 1.4 L1.4 7' stroke='#a0a0a0' stroke-width='2.3' stroke-linecap='round'/></svg>
<svg width='9.2' height='8.2' viewBox='0 0 9.2 8.2' style='left:619.8px;top:29.8px'><path d='M0.9 7.4 V3 L4.6 0.8 L8.2 4.2 V7.4 Z' fill='none' stroke='#8a8a8a' stroke-width='0.8'/><rect x='0.30000000000000004' y='6.800000000000001' width='1.2' height='1.2' fill='#8a8a8a'/><rect x='0.30000000000000004' y='2.4' width='1.2' height='1.2' fill='#8a8a8a'/><rect x='3.9999999999999996' y='0.20000000000000007' width='1.2' height='1.2' fill='#8a8a8a'/><rect x='7.6' y='3.6' width='1.2' height='1.2' fill='#8a8a8a'/><rect x='7.6' y='6.800000000000001' width='1.2' height='1.2' fill='#8a8a8a'/></svg>
<div class="b" style='left:78px;top:139.3px;width:220.2px;height:295.9px;border-radius:3.5px;background:linear-gradient(90deg,#cfe0f4 0%,#dbe7f5 12%,#dbe7f5 30%,#cfdcee 50%,#c9d8ec 62%,#d6e3f3 78%,#d9e5f6 96%,#d4e0f6 100%);border:0.9px solid #48525e;box-shadow:0 0 0 0.7px rgba(255,255,255,.65) inset, 0.5px 0.5px 4.5px 2.2px rgba(0,0,0,.64);'></div>
<svg width='145' height='16' viewBox='155 139.5 145 16' style='left:155px;top:139.5px;overflow:hidden'><defs><filter id='bl' x='-10%' y='-50%' width='120%' height='200%'><feGaussianBlur stdDeviation='1.7'/></filter></defs><g filter='url(#bl)' fill='none' stroke='#3c4c66' stroke-opacity='.6' stroke-width='2.7'><path d='M156 151 L164 148 L172 149.5 L180 150.5 L189 147.5 L198 145 L205 147 L215 145 L222 148.5 L228 152.5 L236 151 L245 148.5 L254 150 L265 152.5'/><path d='M196 141 L203 144 L210 143 L216 147 L219 154'/><path d='M224 141.5 L230 145 L238 143.5 L246 146'/><path d='M178 154 L186 151 L192 153'/></g></svg>
<div class="b" style='left:269.3px;top:139.8px;width:25.4px;height:10.1px;border-radius:0 0 2.5px 2.5px;border:0.7px solid #6a3a32;border-top:none;background:linear-gradient(180deg,#e6b1a4 0%,#d98a78 45%,#c5523c 52%,#cc6048 100%);'></div>
<svg width='7' height='6' viewBox='0 0 7 6' style='left:279.2px;top:142px'><path d='M1 0.8 L6 5.2 M6 0.8 L1 5.2' stroke='#7a3a30' stroke-width='2.3' stroke-linecap='square'/><path d='M1 0.8 L6 5.2 M6 0.8 L1 5.2' stroke='#f6f0ee' stroke-width='1.2' stroke-linecap='square'/></svg>
<span class="t" style='left:83.20px;top:142.69px;font-size:7.7px;line-height:10.01px;transform:scaleX(0.9024);color:#1a1a1a;'>Layer Property</span>
<div class="b" style='left:82.3px;top:154.9px;width:212.5px;height:276.29999999999995px;background:#f0f0f0;border:0.7px solid #93a5bb;'></div>
<span class="t" style='left:89.60px;top:159.69px;font-size:7.7px;line-height:10.01px;transform:scaleX(0.9065);color:#222;'>General</span>
<span class="t" style='left:127.40px;top:159.69px;font-size:7.7px;line-height:10.01px;transform:scaleX(0.9160);color:#111;'>Legend</span>
<span class="t" style='left:164.50px;top:159.69px;font-size:7.7px;line-height:10.01px;transform:scaleX(0.9143);color:#222;'>Chart</span>
<div class="b" style='left:83.0px;top:173.0px;width:211.1px;height:0.8px;background:#d0d0d0;'></div>
<div class="b" style='left:120.7px;top:172.0px;width:36.8px;height:1.8px;background:#4a7ab5;'></div>
<span class="t" style='left:113.60px;top:196.00px;font-size:7.7px;line-height:10.01px;transform:scaleX(0.9450);color:#111;'>Legend Type:</span>
<span class="t" style='left:140.20px;top:211.59px;font-size:7.7px;line-height:10.01px;transform:scaleX(0.9196);color:#111;'>Field:</span>
<div class="b" style='left:163.2px;top:194.2px;width:90.4px;height:13px;background:#fff;border:0.7px solid #dadada;border-radius:1.5px;'></div>
<svg width='6' height='4' viewBox='0 0 6 4' style='left:244.1px;top:199.1px'><path d='M0.6 0.6 L3 3 L5.4 0.6' fill='none' stroke='#555' stroke-width='0.8'/></svg>
<span class="t" style='left:167.50px;top:196.00px;font-size:7.7px;line-height:10.01px;transform:scaleX(0.9506);color:#111;'>GraduatedColor</span>
<div class="b" style='left:163.2px;top:213.4px;width:90.4px;height:12.8px;background:#fff;border:0.7px solid #dadada;border-radius:1.5px;'></div>
<svg width='6' height='4' viewBox='0 0 6 4' style='left:244.1px;top:218.20000000000002px'><path d='M0.6 0.6 L3 3 L5.4 0.6' fill='none' stroke='#555' stroke-width='0.8'/></svg>
<span class="t" style='left:167.50px;top:215.10px;font-size:7.7px;line-height:10.01px;transform:scaleX(0.8681);color:#111;'>WCWT</span>
<div class="b" style='left:82.8px;top:233.2px;width:211.8px;height:172.0px;background:#fff;'></div>
<div class="b" style='left:82.8px;top:233px;width:211.8px;height:11px;background:#f4f4f4;'></div>
<svg width='800' height='497' viewBox='0 0 800 497' style='left:0;top:0'><path d='M82.8 233.3 H294.6 M82.8 244.1 H294.6 M83.1 233.3 V244.1 M116.5 233.3 V244.1 M205.2 233.3 V244.1 M294.3 233.3 V244.1' fill='none' stroke='#3c3c3c' stroke-width='0.85'/></svg>
<span class="t" style='left:88.70px;top:234.69px;font-size:7.7px;line-height:10.01px;transform:scaleX(0.8775);color:#111;'>Symbol</span>
<span class="t" style='left:151.60px;top:234.69px;font-size:7.7px;line-height:10.01px;transform:scaleX(0.9008);color:#111;'>Value</span>
<span class="t" style='left:240.50px;top:234.69px;font-size:7.7px;line-height:10.01px;transform:scaleX(0.8824);color:#111;'>Label</span>
<svg width='800' height='497' viewBox='0 0 800 497' style='left:0;top:0'><rect x='116' y='310.90' width='177.5' height='10.4' fill='#c8c8c8'/><rect x='88.1' y='245.55' width='22.1' height='8.1' fill='#a011d2'/><rect x='88.1' y='256.60' width='22.1' height='8.1' fill='#6010e0'/><rect x='88.1' y='267.65' width='22.1' height='8.1' fill='#12a2f8'/><rect x='88.1' y='278.70' width='22.1' height='8.1' fill='#10c8c6'/><rect x='88.1' y='289.75' width='22.1' height='8.1' fill='#12d612'/><rect x='88.1' y='300.80' width='22.1' height='8.1' fill='#a2e63e'/><rect x='88.1' y='311.85' width='22.1' height='8.1' fill='#e8e03c'/><rect x='88.1' y='322.90' width='22.1' height='8.1' fill='#e8ae30'/><rect x='88.1' y='333.95' width='22.1' height='8.1' fill='#f08222'/><rect x='88.1' y='345.00' width='22.1' height='8.1' fill='#f84040'/><rect x='88.1' y='356.05' width='22.1' height='8.1' fill='#f00088'/></svg>
<span class="t" style='left:115.90px;top:245.37px;font-size:7.74px;line-height:10.06px;transform:scaleX(0.9999);color:#222;font-family:"Liberation Serif", "Noto Serif CJK SC", serif;'><i class="c h">-</i>1319<i class="c">.</i>6999999999998<i class="c">&nbsp;</i><i class="c h">-</i><i class="c">&nbsp;</i><i class="c">·</i></span>
<span class="t" style='left:206.50px;top:245.37px;font-size:7.74px;line-height:10.06px;transform:scaleX(0.9999);color:#222;font-family:"Liberation Serif", "Noto Serif CJK SC", serif;'><i class="c">&lt;</i><i class="c">&nbsp;</i><i class="c h">-</i>1200</span>
<span class="t" style='left:115.90px;top:256.42px;font-size:7.74px;line-height:10.06px;transform:scaleX(0.9999);color:#222;font-family:"Liberation Serif", "Noto Serif CJK SC", serif;'><i class="c h">-</i>1200<i class="c">.</i>0<i class="c">&nbsp;</i><i class="c h">-</i><i class="c">&nbsp;</i><i class="c h">-</i>1100<i class="c">.</i>0</span>
<span class="t" style='left:205.00px;top:256.42px;font-size:7.74px;line-height:10.06px;transform:scaleX(0.9999);color:#222;font-family:"Liberation Serif", "Noto Serif CJK SC", serif;'><i class="c h">-</i>1200<i class="c">&nbsp;</i><i class="c h">-</i><i class="c">&nbsp;</i><i class="c h">-</i>1100</span>
<span class="t" style='left:115.90px;top:267.47px;font-size:7.74px;line-height:10.06px;transform:scaleX(0.9999);color:#222;font-family:"Liberation Serif", "Noto Serif CJK SC", serif;'><i class="c h">-</i>1100<i class="c">.</i>0<i class="c">&nbsp;</i><i class="c h">-</i><i class="c">&nbsp;</i><i class="c h">-</i>1000<i class="c">.</i>0</span>
<span class="t" style='left:205.00px;top:267.47px;font-size:7.74px;line-height:10.06px;transform:scaleX(0.9999);color:#222;font-family:"Liberation Serif", "Noto Serif CJK SC", serif;'><i class="c h">-</i>1100<i class="c">&nbsp;</i><i class="c h">-</i><i class="c">&nbsp;</i><i class="c h">-</i>1000</span>
<span class="t" style='left:115.90px;top:278.52px;font-size:7.74px;line-height:10.06px;transform:scaleX(0.9999);color:#222;font-family:"Liberation Serif", "Noto Serif CJK SC", serif;'><i class="c h">-</i>1000<i class="c">.</i>0<i class="c">&nbsp;</i><i class="c h">-</i><i class="c">&nbsp;</i><i class="c h">-</i>900<i class="c">.</i>0</span>
<span class="t" style='left:205.00px;top:278.52px;font-size:7.74px;line-height:10.06px;transform:scaleX(0.9999);color:#222;font-family:"Liberation Serif", "Noto Serif CJK SC", serif;'><i class="c h">-</i>1000<i class="c">&nbsp;</i><i class="c h">-</i><i class="c">&nbsp;</i><i class="c h">-</i>900</span>
<span class="t" style='left:115.90px;top:289.57px;font-size:7.74px;line-height:10.06px;transform:scaleX(0.9999);color:#222;font-family:"Liberation Serif", "Noto Serif CJK SC", serif;'><i class="c h">-</i>900<i class="c">.</i>0<i class="c">&nbsp;</i><i class="c h">-</i><i class="c">&nbsp;</i><i class="c h">-</i>800<i class="c">.</i>0</span>
<span class="t" style='left:205.00px;top:289.57px;font-size:7.74px;line-height:10.06px;transform:scaleX(0.9999);color:#222;font-family:"Liberation Serif", "Noto Serif CJK SC", serif;'><i class="c h">-</i>900<i class="c">&nbsp;</i><i class="c h">-</i><i class="c">&nbsp;</i><i class="c h">-</i>800</span>
<span class="t" style='left:115.90px;top:300.62px;font-size:7.74px;line-height:10.06px;transform:scaleX(0.9999);color:#222;font-family:"Liberation Serif", "Noto Serif CJK SC", serif;'><i class="c h">-</i>800<i class="c">.</i>0<i class="c">&nbsp;</i><i class="c h">-</i><i class="c">&nbsp;</i><i class="c h">-</i>700<i class="c">.</i>0</span>
<span class="t" style='left:205.00px;top:300.62px;font-size:7.74px;line-height:10.06px;transform:scaleX(0.9999);color:#222;font-family:"Liberation Serif", "Noto Serif CJK SC", serif;'><i class="c h">-</i>800<i class="c">&nbsp;</i><i class="c h">-</i><i class="c">&nbsp;</i><i class="c h">-</i>700</span>
<span class="t" style='left:115.90px;top:311.67px;font-size:7.74px;line-height:10.06px;transform:scaleX(0.9999);color:#222;font-family:"Liberation Serif", "Noto Serif CJK SC", serif;'><i class="c h">-</i>700<i class="c">.</i>0<i class="c">&nbsp;</i><i class="c h">-</i><i class="c">&nbsp;</i><i class="c h">-</i>600<i class="c">.</i>0</span>
<span class="t" style='left:205.00px;top:311.67px;font-size:7.74px;line-height:10.06px;transform:scaleX(0.9999);color:#222;font-family:"Liberation Serif", "Noto Serif CJK SC", serif;'><i class="c h">-</i>700<i class="c">&nbsp;</i><i class="c h">-</i><i class="c">&nbsp;</i><i class="c h">-</i>600</span>
<span class="t" style='left:115.90px;top:322.72px;font-size:7.74px;line-height:10.06px;transform:scaleX(0.9999);color:#222;font-family:"Liberation Serif", "Noto Serif CJK SC", serif;'><i class="c h">-</i>600<i class="c">.</i>0<i class="c">&nbsp;</i><i class="c h">-</i><i class="c">&nbsp;</i><i class="c h">-</i>500<i class="c">.</i>0</span>
<span class="t" style='left:205.00px;top:322.72px;font-size:7.74px;line-height:10.06px;transform:scaleX(0.9999);color:#222;font-family:"Liberation Serif", "Noto Serif CJK SC", serif;'><i class="c h">-</i>600<i class="c">&nbsp;</i><i class="c h">-</i><i class="c">&nbsp;</i><i class="c h">-</i>500</span>
<span class="t" style='left:115.90px;top:333.77px;font-size:7.74px;line-height:10.06px;transform:scaleX(0.9999);color:#222;font-family:"Liberation Serif", "Noto Serif CJK SC", serif;'><i class="c h">-</i>500<i class="c">.</i>0<i class="c">&nbsp;</i><i class="c h">-</i><i class="c">&nbsp;</i><i class="c h">-</i>400<i class="c">.</i>0</span>
<span class="t" style='left:205.00px;top:333.77px;font-size:7.74px;line-height:10.06px;transform:scaleX(0.9999);color:#222;font-family:"Liberation Serif", "Noto Serif CJK SC", serif;'><i class="c h">-</i>500<i class="c">&nbsp;</i><i class="c h">-</i><i class="c">&nbsp;</i><i class="c h">-</i>400</span>
<span class="t" style='left:115.90px;top:344.82px;font-size:7.74px;line-height:10.06px;transform:scaleX(0.9999);color:#222;font-family:"Liberation Serif", "Noto Serif CJK SC", serif;'><i class="c h">-</i>400<i class="c">.</i>0<i class="c">&nbsp;</i><i class="c h">-</i><i class="c">&nbsp;</i><i class="c h">-</i>300<i class="c">.</i>0</span>
<span class="t" style='left:205.00px;top:344.82px;font-size:7.74px;line-height:10.06px;transform:scaleX(0.9999);color:#222;font-family:"Liberation Serif", "Noto Serif CJK SC", serif;'><i class="c h">-</i>400<i class="c">&nbsp;</i><i class="c h">-</i><i class="c">&nbsp;</i><i class="c h">-</i>300</span>
<span class="t" style='left:115.90px;top:355.87px;font-size:7.74px;line-height:10.06px;transform:scaleX(0.9999);color:#222;font-family:"Liberation Serif", "Noto Serif CJK SC", serif;'><i class="c h">-</i>300<i class="c">.</i>0<i class="c">&nbsp;</i><i class="c h">-</i><i class="c">&nbsp;</i>27<i class="c">.</i>5258064516</span>
<span class="t" style='left:206.50px;top:355.87px;font-size:7.74px;line-height:10.06px;transform:scaleX(0.9999);color:#222;font-family:"Liberation Serif", "Noto Serif CJK SC", serif;'><i class="c">&gt;</i><i class="c">&nbsp;</i><i class="c h">-</i>300</span>
<div class="b" style='left:100.6px;top:412.3px;width:45px;height:14.2px;background:#e1eefa;border:0.8px solid #6fa2da;border-radius:1px;'></div>
<span class="t" style='left:114.35px;top:414.60px;font-size:7.7px;line-height:10.01px;transform:scaleX(0.9098);color:#111;'>Apply</span>
<div class="b" style='left:160.6px;top:412.3px;width:45px;height:14.2px;background:#fdfdfd;border:0.7px solid #c9c9c9;border-radius:1px;'></div>
<span class="t" style='left:178.50px;top:414.60px;font-size:7.7px;line-height:10.01px;transform:scaleX(0.8281);color:#111;'>OK</span>
<div class="b" style='left:215.6px;top:412.3px;width:45px;height:14.2px;background:#fdfdfd;border:0.7px solid #c9c9c9;border-radius:1px;'></div>
<span class="t" style='left:227.85px;top:414.60px;font-size:7.7px;line-height:10.01px;transform:scaleX(0.8564);color:#111;'>Cancel</span>
<svg width='9.4' height='7.4' viewBox='0 0 9.4 7.4' style='left:86.6px;top:177.2px'><path d='M0.5 6.9 V2 H2.2 L2.9 1.2 H5 V2 H6.4 V3.2' fill='#d8c850' stroke='#3c360c' stroke-width='0.7'/><path d='M0.5 6.9 L2.2 3.2 H9 L7 6.9 Z' fill='#ece070' stroke='#3c360c' stroke-width='0.7'/><path d='M5.8 1.2 C6.8 0.3 7.8 0.4 8.4 1.2' fill='none' stroke='#333' stroke-width='0.6'/></svg>
<svg width='8.8' height='8.6' viewBox='0 0 8.8 8.6' style='left:100.6px;top:176.6px'><path d='M0.5 0.5 H8.3 V8.1 H0.5Z' fill='#2c4a86' stroke='#14244a' stroke-width='0.6'/><rect x='2' y='0.8' width='4.8' height='3.2' fill='#f4f6fa'/><rect x='2.2' y='5.2' width='4.4' height='2.9' fill='#c8d0e0'/><rect x='3' y='5.8' width='1.2' height='1.8' fill='#1c2c54'/></svg>
<div class="b" style='left:113.6px;top:175.6px;width:0.7px;height:10.4px;background:#d0d0d0;'></div>
<svg width='8.8' height='8.8' viewBox='0 0 8.8 8.8' style='left:119.4px;top:176.6px'><path d='M4.4 0.4 V8.4 M0.4 4.4 H8.4' stroke='#111' stroke-width='1.5'/></svg>
<svg width='8.4' height='8.8' viewBox='0 0 8.4 8.8' style='left:134px;top:176.6px'><path d='M0.3 4.4 H8.1' stroke='#111' stroke-width='1.4'/></svg>
<svg width='9.8' height='9' viewBox='0 0 9.8 9' style='left:147.4px;top:176.4px'><path d='M1.6 1.4 L3.4 1 L5 3.4 L7.6 0.6 L9.2 1 L5.8 4.6 L7.4 7.8 L5.8 8.4 L4.4 5.8 L1.8 8.4 L0.6 7.6 L3.6 4.4 Z' fill='#c41c1c' stroke='#7c0c0c' stroke-width='0.4'/></svg>
<div class="b" style='left:161.4px;top:175.6px;width:0.7px;height:10.4px;background:#d0d0d0;'></div>
<svg width='9.4' height='8.8' viewBox='0 0 9.4 8.8' style='left:166px;top:176px'><rect width='9.4' height='8.8' fill='#1a0a0a'/><path d='M4.7 0.8 L8.8 4.8 H6.6 V8.2 H2.8 V4.8 H0.6 Z' fill='#dc1414'/></svg>
<svg width='9.4' height='8.8' viewBox='0 0 9.4 8.8' style='left:180.4px;top:176px'><rect width='9.4' height='8.8' fill='#1a0a0a'/><path d='M4.7 8 L8.8 4 H6.6 V0.6 H2.8 V4 H0.6 Z' fill='#dc1414'/></svg>
<svg width='9.6' height='9.6' viewBox='0 0 9.6 9.6' style='left:194.4px;top:176px'><defs><radialGradient id='g2' cx='.4' cy='.35' r='.75'><stop offset='0' stop-color='#7cc4f6'/><stop offset='.6' stop-color='#2c86dc'/><stop offset='1' stop-color='#1a5cb0'/></radialGradient></defs><circle cx='4.8' cy='4.8' r='4.4' fill='url(#g2)' stroke='#2a6cc0' stroke-width='0.4'/><path d='M3.4 2.6 L5 2 L6.2 3 L5.4 4.6 L6.2 6.2 L4.8 7.4 L4 5.8 L3 5 Z' fill='#d8ecfc' opacity='.85'/></svg>
<div class="b" style='left:208.3px;top:175.6px;width:0.7px;height:10.4px;background:#d0d0d0;'></div>
<svg width='7.8' height='9.6' viewBox='0 0 7.8 9.6' style='left:213.2px;top:176px'><path d='M4.6 0.4 L7.4 0.4 L4.6 4 L6.4 4 L1 9.4 L2.8 5.4 L1.2 5.4 Z' fill='#f0e030' stroke='#4a4208' stroke-width='0.6' stroke-linejoin='round'/></svg>
</div>
</body></html>
